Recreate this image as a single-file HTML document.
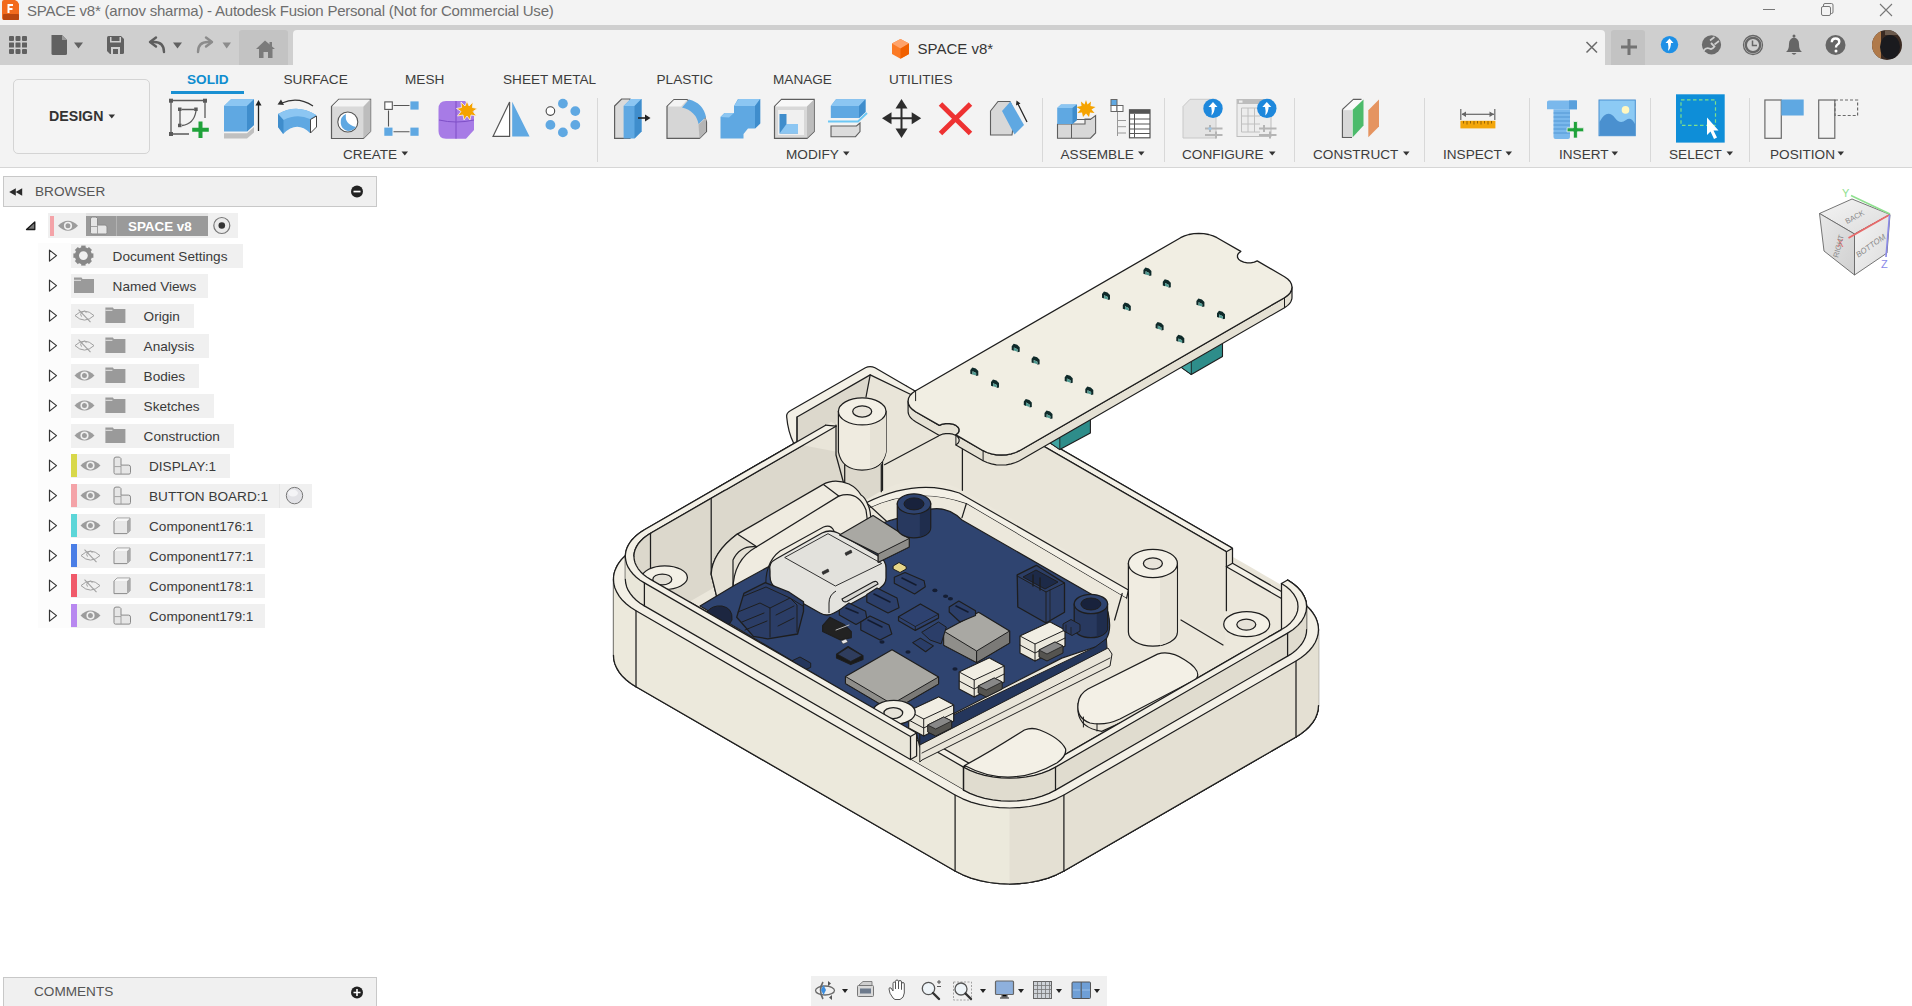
<!DOCTYPE html>
<html><head><meta charset="utf-8">
<style>
*{box-sizing:border-box;margin:0;padding:0}
html,body{width:1912px;height:1006px;overflow:hidden;background:#fff;font-family:"Liberation Sans",sans-serif;position:relative}
.a{position:absolute}
.t{position:absolute;white-space:nowrap;line-height:1}
#title{left:0;top:0;width:1912px;height:25px;background:#f3f3f3}
#tabbar{left:0;top:25px;width:1912px;height:40px;background:#cfcfcf}
#toolbar{left:0;top:65px;width:1912px;height:103px;background:#f3f3f3;border-bottom:1px solid #d6d6d6}
.tab{font-size:13.6px;color:#3c3c3c;top:72.6px}
.grp{font-size:13.6px;color:#3c3c3c;top:148px}
.sep{position:absolute;top:98px;width:1px;height:64px;background:#d8d8d8}
.row{position:absolute;height:25px;background:#f0f0f0}
.rt{position:absolute;font-size:13.6px;color:#3a3a3a;white-space:nowrap;line-height:1}
</style></head><body>
<!-- title bar -->
<div id="title" class="a"></div>
<div class="t" style="left:27px;top:3px;font-size:15px;color:#6e6e6e;letter-spacing:-0.22px">SPACE v8* (arnov sharma) - Autodesk Fusion Personal (Not for Commercial Use)</div>
<!-- tab bar -->
<div id="tabbar" class="a"></div>
<svg class="a" style="left:0;top:0" width="1912" height="65" viewBox="0 0 1912 65">
 <!-- window controls -->
 <line x1="1763" y1="9.5" x2="1775" y2="9.5" stroke="#777" stroke-width="1"/>
 <rect x="1821.5" y="6.5" width="9" height="9" rx="1.5" fill="none" stroke="#777" stroke-width="1"/>
 <path d="M1823.5 6.5 V5 a1.5 1.5 0 0 1 1.5 -1.5 H1831.5 a1.5 1.5 0 0 1 1.5 1.5 V12 a1.5 1.5 0 0 1 -1.5 1.5 H1830.5" fill="none" stroke="#777" stroke-width="1"/>
 <path d="M1880 4 L1892 16 M1892 4 L1880 16" stroke="#777" stroke-width="1.1"/>
 <!-- app logo -->
 <path d="M2 2 Q2 0 4 0 L15 0 Q18 1 19 4 L19 19 Q19 20 18 20 L4 20 Q2 20 2 18 Z" fill="#f26b1d"/>
 <rect x="3" y="14" width="16" height="6" rx="1" fill="#b9470f"/>
 <path d="M7.5 4 H13 V6 H9.5 V8 H12.5 V10 H9.5 V13 H7.5 Z" fill="#fff"/>
 <!-- grid icon -->
 <g fill="#616161">
  <rect x="9" y="36" width="5" height="5" rx="1"/><rect x="15.5" y="36" width="5" height="5" rx="1"/><rect x="22" y="36" width="5" height="5" rx="1"/>
  <rect x="9" y="42.5" width="5" height="5" rx="0.5"/><rect x="15.5" y="42.5" width="5" height="5" rx="0.5"/><rect x="22" y="42.5" width="5" height="5" rx="0.5"/>
  <rect x="9" y="49" width="5" height="5" rx="1"/><rect x="15.5" y="49" width="5" height="5" rx="1"/><rect x="22" y="49" width="5" height="5" rx="1"/>
 </g>
 <!-- file -->
 <path d="M51.5 35 H62 L67 40 V53.5 Q67 55 65.5 55 H53 Q51.5 55 51.5 53.5 Z" fill="#616161"/>
 <path d="M62 35 V40 H67" fill="#9a9a9a"/>
 <path d="M74 42.5 H83 L78.5 48.5 Z" fill="#616161"/>
 <!-- save -->
 <path d="M107 37.5 Q107 36 108.5 36 H121 L124 39 V52.5 Q124 54 122.5 54 H110 L107 51 Z" fill="#616161"/>
 <rect x="110" y="37" width="11" height="5.5" fill="#cfcfcf"/>
 <rect x="111.5" y="37" width="8" height="4" fill="#616161"/>
 <path d="M111 54 V47 H120 V54 H118 V49 H113 V54 Z" fill="#cfcfcf"/>
 <!-- undo -->
 <path d="M164 52 Q164 42 154 42 H152" fill="none" stroke="#5e5e5e" stroke-width="2.4" stroke-linecap="round"/>
 <path d="M156 37.5 L150 42 L156 46.5" fill="none" stroke="#5e5e5e" stroke-width="2.4" stroke-linecap="round" stroke-linejoin="round"/>
 <path d="M173 42.5 H182 L177.5 48.5 Z" fill="#616161"/>
 <!-- redo -->
 <path d="M198 52 Q198 42 208 42 H210" fill="none" stroke="#8c8c8c" stroke-width="2.4" stroke-linecap="round"/>
 <path d="M206 37.5 L212 42 L206 46.5" fill="none" stroke="#8c8c8c" stroke-width="2.4" stroke-linecap="round" stroke-linejoin="round"/>
 <path d="M222.5 42.5 H231 L226.7 48.5 Z" fill="#8c8c8c"/>
 <!-- home tab -->
 <path d="M239 65 V33 Q239 30 242 30 H285 Q288 30 288 33 V65 Z" fill="#c3c3c3"/>
 <path d="M265 40.5 L275 49 H272.5 V58 H268 V52 H263.5 V58 H259 V49 H256 Z" fill="#7b7b7b"/>
 <rect x="269.5" y="42" width="2.5" height="5" fill="#7b7b7b"/>
 <!-- doc tab -->
 <path d="M293 65 V34 Q293 30 297 30 H1601 Q1605 30 1605 34 V65 Z" fill="#f3f3f3"/>
 <!-- orange cube -->
 <path d="M900.5 39 L909 43.5 V54 L900.5 58.7 L892 54 V43.5 Z" fill="#fb7a25"/>
 <path d="M900.5 39 L909 43.5 L900.5 48.5 L892 43.5 Z" fill="#ffa36a"/>
 <path d="M900.5 48.5 L909 43.5 V54 L900.5 58.7 Z" fill="#f06000"/>
 <path d="M1586.5 42 L1597 52.5 M1597 42 L1586.5 52.5" stroke="#6a6a6a" stroke-width="1.5"/>
 <!-- plus tab -->
 <path d="M1611 65 V33 Q1611 30 1614 30 H1642 Q1645 30 1645 33 V65 Z" fill="#c3c3c3"/>
 <path d="M1621 47 H1637 M1629 39 V55" stroke="#737373" stroke-width="3"/>
 <!-- blue upload -->
 <circle cx="1669.5" cy="44.6" r="8.7" fill="#1e90e6"/>
 <path d="M1669.5 38.5 L1673.5 43 H1671 Q1671 48 1668 51 Q1669 47 1667.9 43 H1665.5 Z" fill="#fff"/>
 <!-- plug -->
 <circle cx="1711.5" cy="44.8" r="9.6" fill="#6a6a6a"/>
 <path d="M1703.5 51 Q1706 47 1709.5 48.5 Q1712 50 1714.5 46.5 L1711 43" fill="none" stroke="#cfcfcf" stroke-width="1.8"/>
 <path d="M1710 40.5 L1714.5 37 M1714.5 44.5 L1719 41" stroke="#cfcfcf" stroke-width="1.6"/>
 <path d="M1708 42 L1713 37.5 L1719.5 44 L1715 48.5 Z" fill="#cfcfcf" opacity="0"/>
 <!-- clock -->
 <circle cx="1753" cy="45" r="9.5" fill="none" stroke="#666" stroke-width="1.3"/>
 <circle cx="1753" cy="45" r="7.2" fill="none" stroke="#666" stroke-width="2.3"/>
 <path d="M1752.5 40.5 V45.5 H1757" fill="none" stroke="#666" stroke-width="1.5"/>
 <!-- bell -->
 <path d="M1786 52 Q1789 50 1789 44 Q1789 38.5 1794 37.5 Q1799 38.5 1799 44 Q1799 50 1802 52 Z" fill="#666"/>
 <circle cx="1794" cy="36" r="1.5" fill="#666"/>
 <path d="M1791.5 53 Q1794 56.5 1796.5 53 Z" fill="#666"/>
 <!-- help -->
 <circle cx="1835.5" cy="45" r="10" fill="#666"/>
 <path d="M1831.8 42.2 Q1831.8 38.5 1835.6 38.5 Q1839.3 38.5 1839.3 41.8 Q1839.3 43.8 1837.3 44.8 Q1836 45.5 1836 47.5" fill="none" stroke="#fff" stroke-width="2.4"/>
 <circle cx="1836" cy="51" r="1.5" fill="#fff"/>
 <!-- avatar -->
 <defs><clipPath id="av"><circle cx="1887" cy="45" r="15"/></clipPath></defs>
 <g clip-path="url(#av)">
  <rect x="1872" y="30" width="30" height="30" fill="#3a2a22"/>
  <rect x="1872" y="30" width="9" height="30" fill="#b07a4a"/>
  <ellipse cx="1890" cy="47" rx="10" ry="12" fill="#1a1a1e"/>
  <rect x="1885" y="30" width="12" height="5" fill="#6b5a4d"/>
 </g>
</svg>
<div class="t" style="left:917.5px;top:41px;font-size:15px;color:#353535">SPACE v8*</div>
<!-- toolbar -->
<div id="toolbar" class="a"></div>
<div class="a" style="left:12.5px;top:78.5px;width:137px;height:75px;border:1px solid #d4d4d4;border-radius:5px;background:#f4f4f4"></div>
<div class="t" style="left:49px;top:108.6px;font-size:14.2px;font-weight:700;color:#333">DESIGN</div>
<svg class="a" style="left:108px;top:114px" width="8" height="5"><path d="M0.5 0.5 H7 L3.75 4.5 Z" fill="#333"/></svg>
<div class="t tab" style="left:187px;font-weight:700;color:#0f8dcf">SOLID</div>
<div class="a" style="left:171px;top:91px;width:73px;height:3px;background:#1a90d2"></div>
<div class="t tab" style="left:283.5px">SURFACE</div>
<div class="t tab" style="left:405px">MESH</div>
<div class="t tab" style="left:503px">SHEET METAL</div>
<div class="t tab" style="left:656.5px">PLASTIC</div>
<div class="t tab" style="left:773px">MANAGE</div>
<div class="t tab" style="left:889px">UTILITIES</div>
<div class="t grp" style="left:343px">CREATE</div>
<div class="t grp" style="left:786px">MODIFY</div>
<div class="t grp" style="left:1060.5px">ASSEMBLE</div>
<div class="t grp" style="left:1182px">CONFIGURE</div>
<div class="t grp" style="left:1313px">CONSTRUCT</div>
<div class="t grp" style="left:1443px">INSPECT</div>
<div class="t grp" style="left:1559px">INSERT</div>
<div class="t grp" style="left:1669px">SELECT</div>
<div class="t grp" style="left:1770px">POSITION</div>
<div class="sep" style="left:597px"></div>
<div class="sep" style="left:1042px"></div>
<div class="sep" style="left:1164px"></div>
<div class="sep" style="left:1294px"></div>
<div class="sep" style="left:1424px"></div>
<div class="sep" style="left:1529px"></div>
<div class="sep" style="left:1650px"></div>
<div class="sep" style="left:1749px"></div>
<svg class="a" style="left:0;top:0" width="1912" height="170" viewBox="0 0 1912 170">
 <g fill="#333">
  <path d="M401.5 151.5 H408 L404.75 155.5 Z"/>
  <path d="M843 151.5 H849.5 L846.25 155.5 Z"/>
  <path d="M1138 151.5 H1144.5 L1141.25 155.5 Z"/>
  <path d="M1269 151.5 H1275.5 L1272.25 155.5 Z"/>
  <path d="M1403 151.5 H1409.5 L1406.25 155.5 Z"/>
  <path d="M1505.5 151.5 H1512 L1508.75 155.5 Z"/>
  <path d="M1611.5 151.5 H1618 L1614.75 155.5 Z"/>
  <path d="M1726.5 151.5 H1733 L1729.75 155.5 Z"/>
  <path d="M1837.5 151.5 H1844 L1840.75 155.5 Z"/>
 </g>
 <!-- sketch -->
 <g stroke="#5a5a5a" stroke-width="1.3" fill="none">
  <path d="M171 102 V133 M173 100.5 H203 M205 102 V118 M173 134 H189"/>
  <path d="M180 111 V124 M181.5 109.5 H194.5 M182 125.5 Q194 124 196 111"/>
 </g>
 <g fill="#5a5a5a">
  <rect x="169" y="98.7" width="4" height="4"/><rect x="203" y="98.7" width="4" height="4"/><rect x="169" y="132" width="4" height="4"/>
  <rect x="178" y="107.5" width="3.5" height="3.5"/><rect x="194.2" y="107.5" width="3.5" height="3.5"/><rect x="178" y="123.7" width="3.5" height="3.5"/>
 </g>
 <path d="M198.5 121.5 h4 v6.3 h6.3 v4 h-6.3 v6.3 h-4 v-6.3 h-6.3 v-4 h6.3 z" fill="#1fa23a"/>
 <!-- extrude -->
 <path d="M224 133.3 H247 L254 127 V132.5 L247 138.4 H224 Z" fill="#c0c0c0"/>
 <path d="M224 106 L231 99.2 H254 V125 L247 131.5 H224 Z" fill="#5fa8e2"/>
 <path d="M224 106 L231 99.2 H254 L247 106 Z" fill="#8cc6f2"/>
 <path d="M247 106 L254 99.2 V125 L247 131.5 Z" fill="#3f8dcc"/>
 <path d="M258.5 131 V103" stroke="#222" stroke-width="1.3"/>
 <path d="M255.5 105.5 L258.5 100 L261.5 105.5 Z" fill="#222"/>
 <!-- revolve -->
 <path d="M278 114 Q297 103 316 115 V125 L310 133 Q297 120 283 134 L278 127 Z" fill="#5fa8e2"/>
 <path d="M278 114 Q297 103 316 115 L310 119 Q297 113 283.5 120 Z" fill="#8cc6f2"/>
 <path d="M278 114 L283.5 120 V134 L278 127 Z" fill="#3f8dcc"/>
 <path d="M310.5 119.5 L316.5 116 V127 L310.5 133 Z" fill="#fff" stroke="#444" stroke-width="1"/>
 <path d="M313 106 Q298 96 282 103" fill="none" stroke="#333" stroke-width="1.2"/>
 <path d="M281 99.5 L277.5 104.5 L284 105 Z" fill="#333"/>
 <!-- hole -->
 <path d="M331.5 106.5 L338.7 99.3 H370.6 V131.3 L363.4 138.5 H331.5 Z" fill="#d9d9d9" stroke="#5e5e5e" stroke-width="1.2"/>
 <path d="M363.4 106.5 L370.6 99.3 V131.3 L363.4 138.5 Z" fill="#bdbdbd"/>
 <path d="M332 106.5 L339 99.5 H370 L363.4 106.5 Z" fill="#f4f4f4"/>
 <circle cx="347.8" cy="122" r="10" fill="#fff" stroke="#555" stroke-width="1.1"/>
 <path d="M346 114 Q344 124 356 127 Q353 131 347.8 131 A9 9 0 0 1 346 114 Z" fill="#5fa8e2"/>
 <!-- rect pattern -->
 <rect x="384.8" y="101.9" width="7.5" height="7.5" fill="#fff" stroke="#555" stroke-width="1.1"/>
 <g fill="#5fa8e2"><rect x="410.4" y="101.4" width="8.2" height="8.2"/><rect x="384.3" y="127.6" width="8.2" height="8.2"/><rect x="410.4" y="127.6" width="8.2" height="8.2"/></g>
 <path d="M393.5 105.5 H409.5 M388.5 110.5 V126.5 M393.5 131.7 H409.5" stroke="#555" stroke-width="1.1"/>
 <!-- form -->
 <path d="M446 101 H465 L474 110 V130 L466 138.7 H446 Q438.5 138.7 438.5 131 V109 Q438.5 101 446 101 Z" fill="#a77be6"/>
 <path d="M439 120 Q456 124 474 120 M456 101 V138.7" stroke="#7e4fc7" stroke-width="1" fill="none"/>
 <path d="M467 101 L469 106 L473 102 L472.5 107.5 L477.5 108.5 L473 111.5 L476.5 116 L471 115 L470 120 L467 116 L464 120 L463 115 L457.5 116 L461 111.5 L456.5 108.5 L461.5 107.5 L461 102 L465 106 Z" fill="#f5a300" stroke="#f4f4f4" stroke-width="0.8"/>
 <!-- mirror -->
 <path d="M493 136.4 L509.6 102 V136.4 Z" fill="#fff" stroke="#555" stroke-width="1.2"/>
 <path d="M512.2 101.8 L529.6 136.4 H512.2 Z" fill="#5fa8e2"/>
 <!-- circ pattern -->
 <circle cx="550.4" cy="111.1" r="4.3" fill="#fff" stroke="#444" stroke-width="1.1"/>
 <g fill="#5fa8e2"><circle cx="562.9" cy="103.6" r="4.9"/><circle cx="575.3" cy="111.1" r="4.9"/><circle cx="550.4" cy="124.9" r="4.9"/><circle cx="575.3" cy="124.9" r="4.9"/><circle cx="562.9" cy="132.4" r="4.9"/></g>
 <!-- press pull -->
 <path d="M614.6 106 L621.6 99 H630 V138.4 H614.6 Z" fill="#dadada" stroke="#5e5e5e" stroke-width="1.2"/>
 <path d="M623.6 106 L630.6 99 H641.5 V131.5 L634.5 138.4 H623.6 Z" fill="#5fa8e2"/>
 <path d="M623.6 106 L630.6 99 H641.5 L634.5 106 Z" fill="#8cc6f2"/>
 <path d="M634.5 106 L641.5 99 V131.5 L634.5 138.4 Z" fill="#3f8dcc"/>
 <path d="M638 118 H647" stroke="#222" stroke-width="1.6"/><path d="M645 114.5 L650.5 118 L645 121.5 Z" fill="#222"/>
 <!-- fillet -->
 <path d="M667 106.5 L674 99.5 H687 L694 104 Q704 112 706.5 122 V131.5 L699.5 138.4 H667 Z" fill="#d6d6d6" stroke="#5e5e5e" stroke-width="1.2"/>
 <path d="M667.5 106.5 L674 100 H687 L681 106.5 Z" fill="#f4f4f4"/>
 <path d="M682 107.5 L689 99.5 Q703 103 706 117 L698.5 124 Q696 111 682 107.5 Z" fill="#5fa8e2"/>
 <path d="M698.5 124.5 L706 118 V131.5 L699.5 138.4 Z" fill="#b5b5b5"/>
 <!-- combine -->
 <path d="M720.5 117 L724.5 113 H734 V106 L738 99 H760.2 V123.5 L755 128.5 H748 L743.5 134 V138.4 H720.5 Z" fill="#5fa8e2"/>
 <path d="M734 106 L738.5 99 H760.2 L755 106 Z M720.5 117 L724.5 113 H734 L729 117.5 Z" fill="#8cc6f2"/>
 <path d="M755 106 L760.2 99 V123.5 L755 128.5 Z" fill="#3f8dcc"/>
 <!-- shell -->
 <path d="M774.5 106.5 L781.5 99.3 H814.2 V131.5 L807 138.4 H774.5 Z" fill="#d8d8d8" stroke="#5e5e5e" stroke-width="1.2"/>
 <path d="M775 106.5 L781.5 100 H813.5 L807 106.5 Z" fill="#f8f8f8"/>
 <path d="M807 106.5 L813.8 100 V131.5 L807 138 Z" fill="#bdbdbd"/>
 <rect x="778" y="110" width="26" height="25" fill="#f0f0f0"/>
 <path d="M779.5 114 H786.5 V124 H798 V133.5 H779.5 Z" fill="#3f8dcc"/>
 <path d="M779.5 133.5 L786.5 124 H798 V133.5 Z" fill="#8cc6f2"/>
 <!-- split -->
 <path d="M831 136.7 V126 H856.5 L860 123 V131.5 L855.5 136.7 Z" fill="#dcdcdc" stroke="#5e5e5e" stroke-width="1.1"/>
 <path d="M830.8 106 L836 99.2 H865.5 V112 L859 118 H830.8 Z" fill="#5fa8e2"/>
 <path d="M830.8 106 L836 99.2 H865.5 L859 106 Z" fill="#8cc6f2"/>
 <path d="M859 106 L865.5 99.2 V112 L859 118 Z" fill="#3f8dcc"/>
 <path d="M828 121.5 H858 L867 113" stroke="#6cc8f5" stroke-width="2" fill="none"/>
 <!-- move -->
 <g fill="#2d2d2d">
  <path d="M901.5 99 L907.5 108.5 H895.5 Z"/><path d="M901.5 138 L907.5 128.5 H895.5 Z"/>
  <path d="M882 118.2 L891.5 112.2 V124.2 Z"/><path d="M921.2 118.2 L911.7 112.2 V124.2 Z"/>
 </g>
 <path d="M901.5 107 V129 M890 118.2 H913" stroke="#2d2d2d" stroke-width="2"/>
 <!-- delete -->
 <path d="M940.5 104 L970.5 133.5 M970.5 104 L940.5 133.5" stroke="#ee3232" stroke-width="5"/>
 <!-- scale/change -->
 <path d="M990.5 111 L998 101.5 H1010 L1015 113 L1012 135 H990.5 Z" fill="#d8d8d8" stroke="#5e5e5e" stroke-width="1.1"/>
 <path d="M1002 111 L1010.5 101.5 L1024 125 L1014.5 134.5 Z" fill="#5fa8e2"/>
 <path d="M1027 122 L1018 104" stroke="#222" stroke-width="1.2"/><path d="M1016 105.5 L1016.5 100.5 L1020.5 103.5 Z" fill="#222"/>
 <!-- new component -->
 <path d="M1057.5 124 H1085 V119 H1091 L1095.6 115.5 V133 L1090.5 138.2 H1057.5 Z" fill="#d8d8d8" stroke="#5e5e5e" stroke-width="1.1"/>
 <path d="M1071.5 124 V138 M1071.5 124.5 L1076 119.5 H1091" stroke="#5e5e5e" stroke-width="1" fill="none"/>
 <path d="M1057.2 108 L1061 104.5 H1077 V120 L1072.5 124 H1057.2 Z" fill="#5fa8e2"/>
 <path d="M1057.2 108 L1061 104.5 H1077 L1072.5 108 Z" fill="#8cc6f2"/>
 <path d="M1072.5 108 L1077 104.5 V120 L1072.5 124 Z" fill="#3f8dcc"/>
 <path d="M1086 100 L1087.5 104.5 L1091 101.5 L1090.5 106 L1095.5 107 L1091.5 109.5 L1094.5 113 L1090 112.5 L1089 117 L1086 113.5 L1083 117 L1082 112.5 L1077.5 113 L1080.5 109.5 L1076.5 107 L1081.5 106 L1081 101.5 L1084.5 104.5 Z" fill="#f5a300"/>
 <!-- joint table -->
 <rect x="1111" y="99.5" width="6" height="6" fill="#5fa8e2" stroke="#666" stroke-width="1"/>
 <rect x="1111" y="105.5" width="6" height="6" fill="#fff" stroke="#666" stroke-width="1"/>
 <rect x="1117" y="105.5" width="6" height="6" fill="#fff" stroke="#666" stroke-width="1"/>
 <path d="M1117.5 112 V136 M1117.5 120.5 H1126 M1117.5 126.7 H1126 M1117.5 133 H1126" stroke="#999" stroke-width="1"/>
 <rect x="1129.5" y="109.8" width="20.5" height="28" fill="#fff" stroke="#555" stroke-width="1.2"/>
 <rect x="1129.5" y="109.8" width="20.5" height="4" fill="#555"/>
 <path d="M1134.5 114 V137.5 M1130 119 H1150 M1130 124 H1150 M1130 129 H1150 M1130 133.5 H1150" stroke="#555" stroke-width="1"/>
 <!-- configure 1 -->
 <path d="M1183 106.5 L1190 99.3 H1216 V138 H1183 Z" fill="#e4e4e4" stroke="#c8c8c8" stroke-width="1"/>
 <path d="M1205 128.5 H1222.5 M1205 135 H1222.5" stroke="#b5b5b5" stroke-width="2"/>
 <path d="M1210 125 V132 M1216 131.5 V138.5" stroke="#b5b5b5" stroke-width="2"/>
 <rect x="1208.5" y="127.5" width="3" height="2.2" fill="#9cc8ec"/>
 <circle cx="1213" cy="108.4" r="9.7" fill="#1e88dc"/>
 <path d="M1213 102 L1217.5 107 H1214.8 Q1214.8 112 1211.5 115.5 Q1212.3 110.5 1211.2 107 H1208.5 Z" fill="#fff"/>
 <!-- configure 2 -->
 <rect x="1237" y="99.5" width="34" height="37" fill="#ededed" stroke="#bdbdbd" stroke-width="1"/>
 <rect x="1237" y="99.5" width="34" height="4.5" fill="#bdbdbd"/>
 <rect x="1239" y="100.5" width="3.5" height="2.2" fill="#eee"/>
 <path d="M1241.5 108 V132 M1248 108 V132 M1254.5 108 V132 M1241.5 108 H1260 M1241.5 116 H1260 M1241.5 124 H1260 M1241.5 132 H1260" stroke="#c0c0c0" stroke-width="1" fill="none"/>
 <path d="M1259 128.5 H1276.5 M1259 135 H1276.5" stroke="#b5b5b5" stroke-width="2"/>
 <path d="M1264 125 V132 M1270 131.5 V138.5" stroke="#b5b5b5" stroke-width="2"/>
 <circle cx="1266.8" cy="108.4" r="9.7" fill="#1e88dc"/>
 <path d="M1266.8 102 L1271.3 107 H1268.6 Q1268.6 112 1265.3 115.5 Q1266.1 110.5 1265 107 H1262.3 Z" fill="#fff"/>
 <!-- construct -->
 <path d="M1342.5 109.5 L1353.5 99.3 H1361.5 M1342.5 109.5 V137.3 H1352" stroke="#5e5e5e" stroke-width="1.3" fill="none"/>
 <rect x="1343.2" y="110.2" width="8.8" height="26.5" fill="#d8d8d8"/>
 <path d="M1343.2 109.8 L1353.5 100 H1362.5 L1352.5 109.8 Z" fill="#fafafa"/>
 <path d="M1352.7 109.8 L1363.5 99.6 V125.5 L1352.7 137.3 Z" fill="#4cbb6b"/>
 <path d="M1368.3 110.3 L1379 99.6 V126.5 L1368.3 137.3 Z" fill="#e59460"/>
 <!-- inspect -->
 <path d="M1460.8 109 V120 M1494.8 109 V120" stroke="#666" stroke-width="1.2"/>
 <path d="M1462 114.3 H1494" stroke="#666" stroke-width="1.2"/>
 <path d="M1461.5 114.3 L1466 111.5 V117 Z M1494 114.3 L1489.5 111.5 V117 Z" fill="#666"/>
 <rect x="1460.4" y="120.8" width="35" height="7.6" fill="#f3a60a"/>
 <path d="M1463.5 121 V123.5 M1467 121 V124.5 M1470.5 121 V123.5 M1474 121 V124.5 M1477.5 121 V123.5 M1481 121 V124.5 M1484.5 121 V123.5 M1488 121 V124.5 M1491.5 121 V123.5" stroke="#8a5a00" stroke-width="0.9"/>
 <!-- insert bolt -->
 <path d="M1547 102 Q1547 100.4 1549 100.4 H1575 Q1577 100.4 1577 102 V109.3 H1547 Z" fill="#7ab8ec"/>
 <rect x="1569" y="100.4" width="8" height="8.9" fill="#5aa0dc"/>
 <path d="M1553.5 109.3 H1570 V137 Q1570 139 1568 139 H1555.5 Q1553.5 139 1553.5 137 Z" fill="#7ab8ec"/>
 <path d="M1553.5 113 H1570 M1553.5 117 H1570 M1553.5 121 H1570 M1553.5 125 H1570 M1553.5 129 H1570 M1553.5 133 H1570" stroke="#4a90cf" stroke-width="0.8"/>
 <path d="M1573.4 121.5 h4 v6.3 h6.3 v4 h-6.3 v6.3 h-4 v-6.3 h-6.3 v-4 h6.3 z" fill="#1fa23a" stroke="#f3f3f3" stroke-width="0.8"/>
 <!-- insert image -->
 <rect x="1599" y="100" width="36.3" height="35.7" fill="#8ccaf4" stroke="#4a90cf" stroke-width="1"/>
 <path d="M1599.5 122 Q1607 108 1615 118 Q1620 125 1626 120 Q1631 116 1635 124 V135.5 H1599.5 Z" fill="#4a90cf"/>
 <circle cx="1625.5" cy="109.9" r="3.8" fill="#fff7c0"/>
 <!-- select -->
 <rect x="1676" y="94.3" width="48.7" height="48.3" fill="#0e8ed8"/>
 <rect x="1681" y="99.8" width="34.5" height="25.5" fill="none" stroke="#7ee08a" stroke-width="1.2" stroke-dasharray="3.5 2.5"/>
 <path d="M1707 117.5 V135 L1710.5 131.5 L1714 139 L1717 137.5 L1713.5 130.5 H1718.5 Z" fill="#fff"/>
 <!-- position -->
 <rect x="1764.9" y="100" width="16.4" height="38.3" fill="none" stroke="#6a6a6a" stroke-width="1.2"/>
 <rect x="1781.3" y="99.5" width="22.4" height="16" fill="#5fa8e2"/>
 <rect x="1818.7" y="100" width="16.1" height="38.3" fill="none" stroke="#6a6a6a" stroke-width="1.2"/>
 <rect x="1835" y="100" width="22.6" height="15.5" fill="none" stroke="#6a6a6a" stroke-width="1.2" stroke-dasharray="3 2"/>
</svg>

<!-- MODEL START -->
<svg class="a" style="left:0;top:0" width="1912" height="1006" viewBox="0 0 1912 1006">
<path d="M613.5 579.4 L613.6 576.5 L614.1 573.5 L615.0 570.7 L616.1 567.9 L617.5 565.1 L619.3 562.4 L621.4 559.7 L623.8 557.1 L626.4 554.7 L629.4 552.3 L632.5 550.1 L636.0 548.0 L868.1 413.9 L871.8 412.0 L875.6 410.1 L879.7 408.4 L884.0 406.9 L888.5 405.5 L893.0 404.3 L897.7 403.3 L902.6 402.5 L907.5 401.8 L912.4 401.3 L917.4 401.0 L922.5 400.9 L927.5 401.0 L932.5 401.3 L937.5 401.8 L942.4 402.5 L947.2 403.3 L951.9 404.3 L956.5 405.5 L960.9 406.9 L965.2 408.4 L969.3 410.1 L973.2 412.0 L976.9 413.9 L1296.0 598.2 L1299.4 600.3 L1302.6 602.6 L1305.5 604.9 L1308.2 607.4 L1310.6 610.0 L1312.7 612.6 L1314.4 615.3 L1315.9 618.1 L1317.0 620.9 L1317.8 623.8 L1318.3 626.7 L1318.5 629.6 L1318.5 705.6 L1318.3 708.5 L1317.8 711.4 L1317.0 714.3 L1315.9 717.1 L1314.4 719.9 L1312.7 722.6 L1310.6 725.2 L1308.2 727.8 L1305.5 730.3 L1302.6 732.6 L1299.4 734.9 L1296.0 737.0 L1063.9 871.0 L1060.2 873.0 L1056.3 874.8 L1052.2 876.5 L1048.0 878.1 L1043.5 879.4 L1038.9 880.6 L1034.2 881.6 L1029.4 882.5 L1024.5 883.1 L1019.5 883.6 L1014.5 883.9 L1009.5 884.0 L1004.5 883.9 L999.5 883.6 L994.5 883.1 L989.6 882.5 L984.8 881.6 L980.1 880.6 L975.5 879.4 L971.0 878.1 L966.8 876.5 L962.7 874.8 L958.8 873.0 L955.1 871.0 L636.0 686.8 L632.5 684.6 L629.4 682.4 L626.4 680.0 L623.8 677.5 L621.4 675.0 L619.3 672.3 L617.5 669.6 L616.1 666.8 L615.0 664.0 L614.1 661.1 L613.6 658.2 L613.5 655.4 Z" fill="#ece9dc" stroke="#1e1e1e" stroke-width="1.25" stroke-linejoin="round" stroke-linecap="round"/>
<path d="M1009.5 884.0 L1019.5 883.6 L1029.4 882.5 L1038.9 880.6 L1048.0 878.1 L1056.3 874.8 L1063.9 871.0 L1296.0 737.0 L1302.6 732.6 L1308.2 727.8 L1312.6 722.6 L1315.9 717.1 L1317.8 711.4 L1318.5 705.6 L1318.5 629.6 L1317.8 635.4 L1315.9 641.1 L1312.6 646.6 L1308.2 651.8 L1302.6 656.6 L1296.0 661.0 L1063.9 795.0 L1056.3 798.8 L1048.0 802.1 L1038.9 804.6 L1029.4 806.5 L1019.5 807.6 L1009.5 808.0 Z" fill="#e4e0d3" stroke="none"/>
<path d="M1009.5 884.0 L1019.5 883.6 L1029.4 882.5 L1038.9 880.6 L1048.0 878.1 L1056.3 874.8 L1063.9 871.0 L1296.0 737.0 L1302.6 732.6 L1308.2 727.8 L1312.6 722.6 L1315.9 717.1 L1317.8 711.4 L1318.5 705.6" fill="none" stroke="#1e1e1e" stroke-width="1.25" stroke-linejoin="round" stroke-linecap="round"/>
<path d="M955.1 795.0 L958.8 797.0 L962.7 798.8 L966.8 800.5 L971.0 802.1 L975.5 803.4 L980.1 804.6 L984.8 805.6 L989.6 806.5 L994.5 807.2 L999.5 807.6 L1004.5 807.9 L1009.5 808.0 L1014.5 807.9 L1019.5 807.6 L1024.5 807.2 L1029.4 806.5 L1034.2 805.6 L1038.9 804.6 L1043.5 803.4 L1048.0 802.1 L1052.2 800.5 L1056.3 798.8 L1060.2 797.0 L1063.9 795.0 L1296.0 661.0 L1299.4 658.9 L1302.6 656.6 L1305.5 654.3 L1308.2 651.8 L1310.6 649.2 L1312.6 646.6 L1314.4 643.9 L1315.9 641.1 L1317.0 638.3 L1317.8 635.4 L1318.3 632.5 L1318.5 629.6 L1318.3 626.7 L1317.8 623.8 L1317.0 620.9 L1315.9 618.1 L1314.4 615.3 L1312.6 612.6 L1310.6 610.0 L1308.2 607.4 L1305.5 604.9 L1302.6 602.6 L1299.4 600.3 L1296.0 598.2 L976.9 413.9 L973.2 412.0 L969.3 410.1 L965.2 408.4 L960.9 406.9 L956.5 405.5 L951.9 404.3 L947.2 403.3 L942.4 402.5 L937.5 401.8 L932.5 401.3 L927.5 401.0 L922.5 400.9 L917.4 401.0 L912.4 401.3 L907.5 401.8 L902.6 402.5 L897.7 403.3 L893.0 404.3 L888.4 405.5 L884.0 406.9 L879.7 408.4 L875.6 410.1 L871.8 412.0 L868.1 413.9 L636.0 547.9 L632.6 550.1 L629.4 552.3 L626.4 554.7 L623.8 557.1 L621.4 559.7 L619.3 562.4 L617.5 565.1 L616.1 567.9 L614.9 570.7 L614.1 573.6 L613.6 576.4 L613.5 579.4 L613.6 582.3 L614.1 585.1 L614.9 588.0 L616.1 590.8 L617.5 593.6 L619.3 596.3 L621.4 599.0 L623.8 601.6 L626.4 604.0 L629.4 606.4 L632.6 608.6 L636.0 610.8 Z" fill="#f3f0e6" stroke="#1e1e1e" stroke-width="1.25" stroke-linejoin="round" stroke-linecap="round"/>
<path d="M955.1 871.0 L955.1 795.0" stroke="#1e1e1e" stroke-width="1.25" stroke-linejoin="round" stroke-linecap="round"/>
<path d="M1063.9 871.0 L1063.9 795.0" stroke="#1e1e1e" stroke-width="1.25" stroke-linejoin="round" stroke-linecap="round"/>
<path d="M1296.0 737.0 L1296.0 661.0" stroke="#1e1e1e" stroke-width="1.25" stroke-linejoin="round" stroke-linecap="round"/>
<path d="M636.0 686.8 L636.0 610.8" stroke="#1e1e1e" stroke-width="1.25" stroke-linejoin="round" stroke-linecap="round"/>
<path d="M625.4 556.4 L625.5 553.9 L625.9 551.5 L626.6 549.0 L627.6 546.6 L628.8 544.3 L630.3 542.0 L632.0 539.7 L634.1 537.6 L636.3 535.5 L638.8 533.5 L641.5 531.6 L644.4 529.8 L876.5 395.8 L879.6 394.1 L882.9 392.6 L886.3 391.1 L890.0 389.8 L893.7 388.7 L897.6 387.7 L901.6 386.8 L905.6 386.1 L909.8 385.5 L914.0 385.1 L918.2 384.9 L922.5 384.8 L926.7 384.9 L931.0 385.1 L935.1 385.5 L939.3 386.1 L943.4 386.8 L947.4 387.7 L951.2 388.7 L955.0 389.8 L958.6 391.1 L962.1 392.6 L965.4 394.1 L968.5 395.8 L1287.6 580.0 L1290.5 581.8 L1293.2 583.7 L1295.7 585.7 L1297.9 587.8 L1299.9 590.0 L1301.7 592.2 L1303.2 594.5 L1304.4 596.9 L1305.4 599.3 L1306.1 601.7 L1306.5 604.1 L1306.6 606.6 L1306.6 629.6 L1306.5 632.1 L1306.1 634.5 L1305.4 636.9 L1304.4 639.3 L1303.2 641.7 L1301.7 644.0 L1299.9 646.2 L1297.9 648.4 L1295.7 650.5 L1293.2 652.5 L1290.5 654.4 L1287.6 656.1 L1055.5 790.1 L1052.4 791.8 L1049.1 793.4 L1045.6 794.8 L1042.0 796.1 L1038.3 797.3 L1034.4 798.3 L1030.4 799.1 L1026.3 799.9 L1022.2 800.4 L1018.0 800.8 L1013.8 801.1 L1009.5 801.1 L1005.2 801.1 L1001.0 800.8 L996.8 800.4 L992.7 799.9 L988.6 799.1 L984.6 798.3 L980.7 797.3 L977.0 796.1 L973.4 794.8 L969.9 793.4 L966.6 791.8 L963.5 790.1 L644.4 605.9 L641.5 604.1 L638.8 602.2 L636.3 600.2 L634.1 598.1 L632.0 596.0 L630.3 593.7 L628.8 591.4 L627.6 589.1 L626.6 586.7 L625.9 584.2 L625.5 581.8 L625.4 579.4 Z" fill="#e9e6d9" stroke="#1e1e1e" stroke-width="1.25" stroke-linejoin="round" stroke-linecap="round"/>
<path d="M963.5 767.1 L966.6 768.8 L969.9 770.4 L973.4 771.8 L977.0 773.1 L980.7 774.3 L984.6 775.3 L988.6 776.2 L992.7 776.9 L996.8 777.4 L1001.0 777.8 L1005.2 778.1 L1009.5 778.1 L1013.8 778.1 L1018.0 777.8 L1022.2 777.4 L1026.3 776.9 L1030.4 776.2 L1034.4 775.3 L1038.3 774.3 L1042.0 773.1 L1045.6 771.8 L1049.1 770.4 L1052.4 768.8 L1055.5 767.1 L1287.6 633.1 L1290.5 631.4 L1293.2 629.5 L1295.7 627.5 L1297.9 625.4 L1299.9 623.2 L1301.7 621.0 L1303.2 618.7 L1304.4 616.3 L1305.4 613.9 L1306.1 611.5 L1306.5 609.1 L1306.6 606.6 L1306.5 604.1 L1306.1 601.7 L1305.4 599.3 L1304.4 596.9 L1303.2 594.5 L1301.7 592.2 L1299.9 590.0 L1297.9 587.8 L1295.7 585.7 L1293.2 583.7 L1290.5 581.8 L1287.6 580.0 L968.5 395.8 L965.3 394.1 L962.1 392.6 L958.6 391.1 L955.0 389.8 L951.2 388.7 L947.4 387.7 L943.4 386.8 L939.3 386.1 L935.2 385.5 L931.0 385.1 L926.7 384.9 L922.5 384.8 L918.2 384.9 L914.0 385.1 L909.8 385.5 L905.6 386.1 L901.6 386.8 L897.6 387.7 L893.7 388.7 L890.0 389.8 L886.3 391.1 L882.9 392.6 L879.6 394.1 L876.5 395.8 L644.4 529.8 L641.5 531.6 L638.8 533.5 L636.3 535.5 L634.1 537.6 L632.1 539.7 L630.3 542.0 L628.8 544.3 L627.6 546.6 L626.6 549.0 L625.9 551.4 L625.5 553.9 L625.3 556.3 L625.5 558.8 L625.9 561.3 L626.6 563.7 L627.6 566.1 L628.8 568.4 L630.3 570.7 L632.1 573.0 L634.1 575.1 L636.3 577.2 L638.8 579.2 L641.5 581.1 L644.4 582.9 Z" fill="#f3f0e6" stroke="#1e1e1e" stroke-width="1.25" stroke-linejoin="round" stroke-linecap="round"/>
<path d="M969.6 763.6 L972.3 765.1 L975.1 766.5 L978.1 767.7 L981.3 768.8 L984.5 769.8 L987.9 770.7 L991.4 771.5 L994.9 772.1 L998.5 772.6 L1002.1 772.9 L1005.8 773.1 L1009.5 773.2 L1013.2 773.1 L1016.9 772.9 L1020.5 772.6 L1024.1 772.1 L1027.6 771.5 L1031.1 770.7 L1034.5 769.8 L1037.7 768.8 L1040.9 767.7 L1043.9 766.5 L1046.7 765.1 L1049.4 763.6 L1281.5 629.6 L1284.0 628.1 L1286.4 626.4 L1288.5 624.7 L1290.5 622.9 L1292.2 621.0 L1293.7 619.1 L1295.1 617.1 L1296.1 615.0 L1297.0 613.0 L1297.6 610.9 L1297.9 608.7 L1298.0 606.6 L1297.9 604.5 L1297.6 602.3 L1297.0 600.2 L1296.1 598.2 L1295.1 596.1 L1293.7 594.1 L1292.2 592.2 L1290.5 590.3 L1288.5 588.5 L1286.4 586.8 L1284.0 585.1 L1281.5 583.5 L962.4 399.3 L959.7 397.8 L956.8 396.5 L953.8 395.2 L950.7 394.1 L947.4 393.1 L944.1 392.2 L940.6 391.5 L937.1 390.9 L933.5 390.4 L929.8 390.0 L926.2 389.8 L922.5 389.8 L918.8 389.8 L915.1 390.0 L911.5 390.4 L907.9 390.9 L904.3 391.5 L900.9 392.2 L897.5 393.1 L894.2 394.1 L891.1 395.2 L888.1 396.5 L885.2 397.8 L882.5 399.3 L650.5 533.3 L647.9 534.9 L645.6 536.5 L643.4 538.2 L641.5 540.1 L639.7 541.9 L638.2 543.9 L636.9 545.9 L635.8 547.9 L635.0 550.0 L634.4 552.1 L634.0 554.2 L633.9 556.3 L634.0 558.5 L634.4 560.6 L635.0 562.7 L635.8 564.8 L636.9 566.8 L638.2 568.8 L639.7 570.8 L641.5 572.6 L643.4 574.5 L645.6 576.2 L647.9 577.8 L650.5 579.4 Z" fill="#ebe7db" stroke="#1e1e1e" stroke-width="1.25" stroke-linejoin="round" stroke-linecap="round"/>
<path d="M633.9 556.3 L634.2 553.2 L635.0 550.0 L636.4 546.9 L638.2 543.9 L640.6 541.0 L643.4 538.2 L646.7 535.7 L650.5 533.3 L882.5 399.3 L882.5 490.3 L650.5 624.3 L646.7 626.7 L643.4 629.2 L640.6 632.0 L638.2 634.9 L636.4 637.9 L635.0 641.0 L634.2 644.2 L633.9 647.3 Z" fill="#dcd8cc" stroke="none"/>
<path d="M882.5 399.3 L889.3 396.0 L896.8 393.3 L905.0 391.3 L913.6 390.2 L922.5 389.8 L931.3 390.2 L939.9 391.3 L948.1 393.3 L955.7 396.0 L962.4 399.3 L1226.4 551.7 L1226.4 642.7 L962.4 490.3 L955.7 487.0 L948.1 484.3 L939.9 482.3 L931.3 481.2 L922.5 480.8 L913.6 481.2 L905.0 482.3 L896.8 484.3 L889.3 487.0 L882.5 490.3 Z" fill="#e9e5d9" stroke="none"/>
<path d="M633.9 556.3 L634.2 553.2 L635.0 550.0 L636.4 546.9 L638.2 543.9 L640.6 541.0 L643.4 538.2 L646.7 535.7 L650.5 533.3 L882.5 399.3 L889.3 396.0 L896.8 393.3 L905.0 391.3 L913.6 390.2 L922.5 389.8 L931.3 390.2 L939.9 391.3 L948.1 393.3 L955.7 396.0 L962.4 399.3 L1226.4 551.7" fill="none" stroke="#1e1e1e" stroke-width="1.25" stroke-linejoin="round" stroke-linecap="round"/>
<path d="M650.5 533.3 L650.5 624.3" stroke="#1e1e1e" stroke-width="1.25" stroke-linejoin="round" stroke-linecap="round"/>
<path d="M882.5 399.3 L882.5 490.3" stroke="#1e1e1e" stroke-width="1.25" stroke-linejoin="round" stroke-linecap="round"/>
<path d="M962.4 399.3 L962.4 490.3" stroke="#1e1e1e" stroke-width="1.25" stroke-linejoin="round" stroke-linecap="round"/>
<path d="M1232.5 545.2 L1241.7 550.5 L1250.9 555.8 L1260.0 561.1 L1269.2 566.4 L1278.4 571.7 L1287.6 577.0 L1287.6 595.0 L1278.4 589.7 L1269.2 584.4 L1260.0 579.1 L1250.9 573.8 L1241.7 568.5 L1232.5 563.2 Z" fill="#ffffff" stroke="none"/>
<path d="M1226.4 566.7 L1235.6 572.0 L1244.8 577.3 L1254.0 582.6 L1263.2 587.9 L1272.3 593.2 L1281.5 598.5 L1281.5 585.0 L1272.3 579.7 L1263.2 574.4 L1254.0 569.1 L1244.8 563.8 L1235.6 558.5 L1226.4 553.2 Z" fill="#e9e5d9" stroke="none"/>
<path d="M1232.5 563.2 L1241.7 568.5 L1250.9 573.8 L1260.0 579.1 L1269.2 584.4 L1278.4 589.7 L1287.6 595.0 L1281.5 598.5 L1272.3 593.2 L1263.2 587.9 L1254.0 582.6 L1244.8 577.3 L1235.6 572.0 L1226.4 566.7 Z" fill="#f3f0e6" stroke="none"/>
<path d="M1232.5 563.2 L1241.7 568.5 L1250.9 573.8 L1260.0 579.1 L1269.2 584.4 L1278.4 589.7 L1287.6 595.0" fill="none" stroke="#1e1e1e" stroke-width="1.25" stroke-linejoin="round" stroke-linecap="round"/>
<path d="M1226.4 566.7 L1235.6 572.0 L1244.8 577.3 L1254.0 582.6 L1263.2 587.9 L1272.3 593.2 L1281.5 598.5" fill="none" stroke="#1e1e1e" stroke-width="1.25" stroke-linejoin="round" stroke-linecap="round"/>
<path d="M1226.4 551.7 L1232.5 548.2 L1232.5 563.2 L1226.4 566.7 Z" fill="#e6e2d6" stroke="#1e1e1e" stroke-width="1.25" stroke-linejoin="round"/>
<path d="M1226.4 566.7 L1226.4 610.7" fill="none" stroke="#1e1e1e" stroke-width="1.25" stroke-linejoin="round" stroke-linecap="round"/>
<path d="M1281.5 583.5 L1285.6 586.2 L1289.2 589.1 L1292.2 592.2 L1294.6 595.5 L1296.4 598.9 L1297.6 602.3 L1298.0 605.9 L1297.8 609.4 L1297.8 663.4 L1298.0 659.9 L1297.6 656.3 L1296.4 652.9 L1294.6 649.5 L1292.2 646.2 L1289.2 643.1 L1285.6 640.2 L1281.5 637.5 Z" fill="#eeeadf" stroke="none"/>
<path d="M1281.5 583.5 L1281.5 637.5" fill="none" stroke="#1e1e1e" stroke-width="1.25" stroke-linejoin="round" stroke-linecap="round"/>
<ellipse cx="664.7" cy="577.6" rx="22.7" ry="11.8" fill="#f3f0e6" stroke="#1e1e1e" stroke-width="1.25"/>
<ellipse cx="662.3" cy="579.4" rx="9.5" ry="5.4" fill="#e2dfd5" stroke="#1e1e1e" stroke-width="1.25"/>
<path d="M711.2 498.4 L711.2 574.0" fill="none" stroke="#1e1e1e" stroke-width="1.25" stroke-linejoin="round" stroke-linecap="round"/>
<path d="M873.0 366.0 L945.0 408.0 L990.0 380.0 L940.0 340.0 L880.0 352.0 Z" fill="#ffffff" stroke="none"/>
<path d="M786.7 417.0 L790.7 413.0 L865.4 369.3 L875.0 369.3 L915.0 393.0 L915.0 440.0 L886.0 445.0 L838.0 452.0 L793.8 443.5 Z" fill="#e9e5d9" stroke="none"/>
<path d="M797.0 417.0 L870.2 374.9 L866.0 397.0 L838.0 411.4 L836.0 425.0 L831.2 421.8 L797.0 441.5 Z" fill="#dcd8cc" stroke="none"/>
<path d="M786.7 417 Q786 413 790.7 410.5 L865.4 367.8 Q870 365.5 875 367.8 L915 391 L915 396.5 L870.2 374.9 L797 417 L797 441.5 L793.8 443.5 Q788 432 786.7 417 Z" fill="#f3f0e6" stroke="#1e1e1e" stroke-width="1.25" stroke-linejoin="round"/>
<path d="M870.2 374.9 L866.0 397.0" fill="none" stroke="#1e1e1e" stroke-width="1.25" stroke-linejoin="round" stroke-linecap="round"/>
<path d="M797.0 417.0 L797.0 441.5" fill="none" stroke="#1e1e1e" stroke-width="1.0" stroke-linejoin="round" stroke-linecap="round"/>
<path d="M719.9 486.2 L825.6 425.2 L836.0 426.2 L726.0 489.7 Z" fill="#f3f0e6" stroke="none"/>
<path d="M719.9 486.2 L825.6 425.2" fill="none" stroke="#1e1e1e" stroke-width="1.25" stroke-linejoin="round" stroke-linecap="round"/>
<path d="M726.0 489.7 L836.0 426.2" fill="none" stroke="#1e1e1e" stroke-width="1.25" stroke-linejoin="round" stroke-linecap="round"/>
<path d="M825.6 425.2 L836.0 426.2" fill="none" stroke="#1e1e1e" stroke-width="1.25" stroke-linejoin="round" stroke-linecap="round"/>
<path d="M838.4 411.4 V452 Q842 470 862 470 Q883 470 886 452 V411.4 Z" fill="#efebe0" stroke="#1e1e1e" stroke-width="1.25"/>
<path d="M870 420 V468 Q883 466 886 452 V411.4 Z" fill="#e6e2d6" stroke="none"/>
<ellipse cx="862.2" cy="411.4" rx="23.8" ry="13.5" fill="#f3f0e6" stroke="#1e1e1e" stroke-width="1.25"/>
<ellipse cx="862.2" cy="411.4" rx="9.5" ry="5.6" fill="#e8e4da" stroke="#1e1e1e" stroke-width="1.25"/>
<path d="M836.0 425.0 L836.0 455.0 L844.7 487.0" fill="none" stroke="#1e1e1e" stroke-width="1.25" stroke-linejoin="round" stroke-linecap="round"/>
<path d="M881.3 464.7 L881.3 491.7" fill="none" stroke="#1e1e1e" stroke-width="1.25" stroke-linejoin="round" stroke-linecap="round"/>
<path d="M884.5 464.7 L938.5 436.0" fill="none" stroke="#1e1e1e" stroke-width="1.25" stroke-linejoin="round" stroke-linecap="round"/>
<path d="M844.7 464.7 L844.7 487.0" fill="none" stroke="#1e1e1e" stroke-width="1.25" stroke-linejoin="round" stroke-linecap="round"/>
<path d="M866.3 502.7 Q916 478 959.3 493 L1128.5 590 L1126.5 598.4 L966.5 503.9 Q916 486 868.6 508.6 Z" fill="#f3f0e6" stroke="#1e1e1e" stroke-width="1.2"/>
<path d="M868.6 508.6 Q916 486 966.5 503.9 L1126.5 598.4 L1114.6 620 L1093.6 595.6 L959.3 518.2 Q947 508 930.7 509.8 L887.7 521.2 Z" fill="#ece8dc" stroke="none"/>
<path d="M866.3 502.7 L886.5 521.2" fill="none" stroke="#1e1e1e" stroke-width="1.25" stroke-linejoin="round" stroke-linecap="round"/>
<path d="M966.3 503.7 L962.0 517.6" fill="none" stroke="#1e1e1e" stroke-width="1.25" stroke-linejoin="round" stroke-linecap="round"/>
<path d="M1122.2 593.5 L1114.6 620.0" fill="none" stroke="#1e1e1e" stroke-width="1.25" stroke-linejoin="round" stroke-linecap="round"/>
<path d="M711.2 574.4 Q712 553 737.3 534.1 L822.4 484.9 Q834 478 849 484 Q857 488 861 495 Q865 497 868 505 Q872 512 871 540 L820 575 L745 618 L720 610 Z" fill="#efebe0" stroke="#1e1e1e" stroke-width="1.25"/>
<path d="M711.2 574.4 Q712 553 737.3 534.1 L756.7 546.8 Q733 560 733 590 L733 612 L720 610 Z" fill="#e4e0d4" stroke="#1e1e1e" stroke-width="1.2"/>
<path d="M756.7 546.8 L838.7 496.1" fill="none" stroke="#1e1e1e" stroke-width="1.25" stroke-linejoin="round" stroke-linecap="round"/>
<path d="M823.8 484.8 L838.7 496.1" fill="none" stroke="#1e1e1e" stroke-width="1.25" stroke-linejoin="round" stroke-linecap="round"/>
<path d="M838.7 496.1 Q858 490 866 510 L868 525" fill="none" stroke="#1e1e1e" stroke-width="1.2"/>
<path d="M733 593 L733 560 Q740 545 756.7 546.8" fill="none" stroke="#1e1e1e" stroke-width="1.2"/>
<path d="M700 606 L735 585 L790 555 L887.7 521.2 L925 510.5 Q946 504 962 520 L1093.6 595.6 Q1104 603 1108 612 Q1112 630 1106.4 638.6 Q1102 645 1095.2 647 L1061.8 658.1 L919.8 731 L919.8 747 L916.8 735 Z" fill="#2f4470" stroke="#1e1e1e" stroke-width="1.2" stroke-linejoin="round"/>
<path d="M919.8 731.0 L1095.2 647.0 L1106.4 638.6 L1107.0 648.0 L1096.0 657.0 L919.8 745.0 Z" fill="#24365c" stroke="#1e1e1e" stroke-width="1.0" stroke-linejoin="round"/>
<path d="M919.8 745.0 L1108.0 648.0 L1112.0 654.0 L1110.0 666.0 L922.0 760.0 L919.8 762.0 Z" fill="#e9e5d9" stroke="#1e1e1e" stroke-width="1.0" stroke-linejoin="round"/>
<path d="M922.0 753.0 L1110.0 658.0" fill="none" stroke="#1e1e1e" stroke-width="0.9" stroke-linejoin="round" stroke-linecap="round"/>
<path d="M770 571 Q768 563 776 559 L822 533 Q830 529 838 533 L880 557 Q886 561 886 568 L886 578 Q886 584 880 588 L834 613 Q827 617 820 613 L776 588 Q770 584 770 576 Z" fill="#e4e3de" stroke="#1e1e1e" stroke-width="1.3"/>
<path d="M784.7 557.5 L828 533.7 L881.7 563.5 L835.4 586 Z" fill="#e2e1dc" stroke="#1e1e1e" stroke-width="0.9"/>
<path d="M836 591 Q829 595 829 603 L829 613" fill="none" stroke="#1e1e1e" stroke-width="1.0"/>
<path d="M842 599 L873 582 Q877 580 878 584 L847 601.5 Q843 603 842 599 Z" fill="#d8d7d2" stroke="#1e1e1e" stroke-width="1.1"/>
<path d="M766 590 Q764 563 780 551 L823.5 527 Q831 524 834 531" fill="none" stroke="#1e1e1e" stroke-width="1.1"/>
<path d="M822.0 572.0 L828.0 569.0 L829.0 571.5 L823.0 574.5 Z" fill="#333" stroke="#1e1e1e" stroke-width="0.6" stroke-linejoin="round"/>
<path d="M845.0 553.0 L851.0 550.0 L852.0 552.5 L846.0 555.5 Z" fill="#333" stroke="#1e1e1e" stroke-width="0.6" stroke-linejoin="round"/>
<path d="M755.0 602.0 L763.0 598.0 L770.0 602.0 L770.0 612.0 L762.0 616.0 L755.0 612.0 Z" fill="#e4e3de" stroke="#1e1e1e" stroke-width="1.0" stroke-linejoin="round"/>
<path d="M759.0 605.0 L764.0 603.0 L766.0 605.0 L766.0 610.0 L761.0 612.0 L759.0 610.0 Z" fill="#555" stroke="#1e1e1e" stroke-width="0.6" stroke-linejoin="round"/>
<path d="M839.5 534.9 L873.1 515.5 L909.2 538.5 L909.2 547.0 L878.2 562.3 L878.2 554.0 Z" fill="#a9a8a3" stroke="#1e1e1e" stroke-width="1.2" stroke-linejoin="round"/>
<path d="M878.2 554.0 L909.2 538.5 L909.2 547.0 L878.2 562.3 Z" fill="#8f8e8a" stroke="#1e1e1e" stroke-width="1.0" stroke-linejoin="round"/>
<path d="M736.7 617.3 L743.9 593.4 L765.3 582.7 L789.2 592.2 L803.5 601.8 L803.5 611.3 L797.6 634.0 L767.7 638.8 L753.4 636.4 Z" fill="#2b3d66" stroke="#1e1e1e" stroke-width="1.3" stroke-linejoin="round"/>
<path d="M744.0 596.0 L766.0 587.0 L790.0 598.0 L803.0 606.0" fill="none" stroke="#1e1e1e" stroke-width="1.0" stroke-linejoin="round" stroke-linecap="round"/>
<path d="M738.0 612.0 L760.0 603.0 L770.0 608.0 L770.0 637.0" fill="none" stroke="#1e1e1e" stroke-width="1.0" stroke-linejoin="round" stroke-linecap="round"/>
<path d="M742.0 622.0 L764.0 613.0" fill="none" stroke="#1e1e1e" stroke-width="1.0" stroke-linejoin="round" stroke-linecap="round"/>
<path d="M745.0 630.0 L767.0 621.0" fill="none" stroke="#1e1e1e" stroke-width="1.0" stroke-linejoin="round" stroke-linecap="round"/>
<path d="M770.0 608.0 L790.0 598.0 L797.0 605.0 L797.0 632.0" fill="none" stroke="#1e1e1e" stroke-width="1.0" stroke-linejoin="round" stroke-linecap="round"/>
<path d="M776.0 615.0 L794.0 606.0" fill="none" stroke="#1e1e1e" stroke-width="1.0" stroke-linejoin="round" stroke-linecap="round"/>
<path d="M778.0 626.0 L794.0 618.0" fill="none" stroke="#1e1e1e" stroke-width="1.0" stroke-linejoin="round" stroke-linecap="round"/>
<path d="M707 612 Q712 605 722 606 Q733 608 732 620 L728 626 Q715 627 707 620 Z" fill="#1c2640" stroke="#1e1e1e" stroke-width="1"/>
<path d="M791.6 661.0 L800.0 657.0 L810.7 663.0 L810.7 667.4 L802.0 671.0 Z" fill="#24365c" stroke="#1e1e1e" stroke-width="1.0" stroke-linejoin="round"/>
<path d="M897.3 503.9 L897.3 527.6999999999999 A16.7 10.1 0 0 0 930.7 527.6999999999999 L930.7 503.9 Z" fill="#28395f" stroke="#1e1e1e" stroke-width="1.25"/><path d="M919.845 512.99 L919.845 536.79 A16.7 10.1 0 0 0 930.1 528.6999999999999 L930.1 503.9 Z" fill="#1f2d4d" stroke="none"/><ellipse cx="914" cy="503.9" rx="16.7" ry="10.1" fill="#2f4470" stroke="#1e1e1e" stroke-width="1.25"/>
<ellipse cx="914" cy="503.9" rx="10" ry="6" fill="#18223c" stroke="#1e1e1e" stroke-width="1.0"/>
<path d="M1074.2 604 L1074.2 628 A16.7 9.7 0 0 0 1107.6000000000001 628 L1107.6000000000001 604 Z" fill="#28395f" stroke="#1e1e1e" stroke-width="1.25"/><path d="M1096.7450000000001 612.73 L1096.7450000000001 636.73 A16.7 9.7 0 0 0 1107.0000000000002 629 L1107.0000000000002 604 Z" fill="#1f2d4d" stroke="none"/><ellipse cx="1090.9" cy="604" rx="16.7" ry="9.7" fill="#2f4470" stroke="#1e1e1e" stroke-width="1.25"/>
<ellipse cx="1090.9" cy="604" rx="10" ry="6" fill="#18223c" stroke="#1e1e1e" stroke-width="1.0"/>
<path d="M943.7 631.0 L978.6 612.3 L1009.6 631.0 L1009.6 643.0 L976.6 662.5 L943.7 645.2 Z" fill="#a9a8a3" stroke="#1e1e1e" stroke-width="1.25" stroke-linejoin="round"/>
<path d="M943.7 631.0 L976.6 651.0 L976.6 662.5 L943.7 645.2 Z" fill="#8f8e8a" stroke="#1e1e1e" stroke-width="1.0" stroke-linejoin="round"/>
<path d="M976.6 651.0 L1009.6 631.0 L1009.6 643.0 L976.6 662.5 Z" fill="#7b7a77" stroke="#1e1e1e" stroke-width="1.0" stroke-linejoin="round"/>
<path d="M845.5 676.5 L892.0 649.7 L938.5 677.0 L938.5 684.0 L892.0 711.0 L845.5 683.5 Z" fill="#a9a8a3" stroke="#1e1e1e" stroke-width="1.25" stroke-linejoin="round"/>
<path d="M845.5 676.5 L892.0 704.0 L892.0 711.0 L845.5 683.5 Z" fill="#8f8e8a" stroke="#1e1e1e" stroke-width="1.0" stroke-linejoin="round"/>
<path d="M892.0 704.0 L938.5 677.0 L938.5 684.0 L892.0 711.0 Z" fill="#7b7a77" stroke="#1e1e1e" stroke-width="1.0" stroke-linejoin="round"/>
<path d="M898.5 616.8 L920.4 603.9 L938.5 614.2 L938.5 618.1 L915.3 630.4 L898.5 620.7 Z" fill="#2e4270" stroke="#1e1e1e" stroke-width="1.2" stroke-linejoin="round"/>
<path d="M898.5 616.8 L915.3 626.5 L938.5 614.2" fill="none" stroke="#1e1e1e" stroke-width="0.9" stroke-linejoin="round" stroke-linecap="round"/>
<path d="M915.3 626.5 L915.3 630.4" fill="none" stroke="#1e1e1e" stroke-width="0.9" stroke-linejoin="round" stroke-linecap="round"/>
<path d="M912.7 642.6 L920.4 638.1 L933.4 645.9 L925.6 651.7 Z" fill="#2a3d68" stroke="#1e1e1e" stroke-width="1.1" stroke-linejoin="round"/>
<path d="M921.7 632.3 L938.5 622.0 L946.3 627.1 L941.1 643.9 L930.0 640.0 Z" fill="#2b3e69" stroke="#1e1e1e" stroke-width="1.0" stroke-linejoin="round"/>
<path d="M836.5 654.3 L848.1 646.5 L863.0 655.6 L863.0 659.4 L850.7 664.6 L836.5 658.1 Z" fill="#1a1a1a" stroke="#1e1e1e" stroke-width="1.1" stroke-linejoin="round"/>
<path d="M837.5 654.3 L848.1 647.5 L862.0 655.6 L850.7 661.5 Z" fill="#2f3d5e" stroke="#1e1e1e" stroke-width="0.8" stroke-linejoin="round"/>
<path d="M822.6 625.6 L829.8 617.3 L844.1 624.4 L851.3 631.6 L851.3 637.6 L840.5 640.0 L822.6 631.6 Z" fill="#222222" stroke="#1e1e1e" stroke-width="1.1" stroke-linejoin="round"/>
<path d="M836.0 630.0 L849.0 625.0" fill="none" stroke="#bbbbbb" stroke-width="1.0" stroke-linejoin="round" stroke-linecap="round"/>
<path d="M841.0 641.0 L846.0 639.0 L848.0 642.0 L843.0 644.0 Z" fill="#e8e8e8" stroke="#1e1e1e" stroke-width="0.5" stroke-linejoin="round"/>
<path d="M839.3 610.1 L848.9 603.0 L865.6 611.3 L866.8 618.5 L856.0 624.4 L839.3 614.9 Z" fill="#2c3f6a" stroke="#1e1e1e" stroke-width="1.15" stroke-linejoin="round"/>
<path d="M860.8 622.0 L870.0 616.0 L889.0 625.0 L891.8 634.0 L880.0 640.0 L860.8 630.0 Z" fill="#2c3f6a" stroke="#1e1e1e" stroke-width="1.15" stroke-linejoin="round"/>
<path d="M866.8 594.6 L877.0 588.0 L897.0 598.0 L899.0 607.7 L888.0 613.0 L866.8 602.0 Z" fill="#2c3f6a" stroke="#1e1e1e" stroke-width="1.15" stroke-linejoin="round"/>
<path d="M894.3 577.3 L905.0 572.5 L924.1 580.8 L925.3 586.8 L914.6 594.0 L894.3 583.2 Z" fill="#2c3f6a" stroke="#1e1e1e" stroke-width="1.15" stroke-linejoin="round"/>
<path d="M949.2 607.1 L958.8 601.1 L975.5 610.7 L975.5 615.5 L960.0 622.0 L949.2 612.0 Z" fill="#2c3f6a" stroke="#1e1e1e" stroke-width="1.15" stroke-linejoin="round"/>
<path d="M846.0 608.0 L858.0 613.0" fill="none" stroke="#141c30" stroke-width="1.6" stroke-linejoin="round" stroke-linecap="round"/>
<path d="M868.0 620.0 L882.0 627.0" fill="none" stroke="#141c30" stroke-width="1.6" stroke-linejoin="round" stroke-linecap="round"/>
<path d="M874.0 594.0 L890.0 602.0" fill="none" stroke="#141c30" stroke-width="1.6" stroke-linejoin="round" stroke-linecap="round"/>
<path d="M902.0 578.0 L916.0 585.0" fill="none" stroke="#141c30" stroke-width="1.6" stroke-linejoin="round" stroke-linecap="round"/>
<path d="M956.0 606.0 L968.0 612.0" fill="none" stroke="#141c30" stroke-width="1.6" stroke-linejoin="round" stroke-linecap="round"/>
<path d="M893.1 566.0 L899.0 562.5 L906.2 566.5 L906.2 569.0 L900.0 572.5 L893.1 569.0 Z" fill="#e6d68a" stroke="#1e1e1e" stroke-width="1.0" stroke-linejoin="round"/>
<ellipse cx="934.9" cy="590.4" rx="2.6" ry="1.8" fill="#151e33"/>
<ellipse cx="945.6" cy="596.3" rx="2.6" ry="1.8" fill="#151e33"/>
<ellipse cx="950.4" cy="598.7" rx="2.6" ry="1.8" fill="#151e33"/>
<ellipse cx="882" cy="642" rx="2.6" ry="1.8" fill="#151e33"/>
<ellipse cx="955" cy="669" rx="2.6" ry="1.8" fill="#151e33"/>
<ellipse cx="969" cy="676" rx="2.6" ry="1.8" fill="#151e33"/>
<ellipse cx="1051" cy="632" rx="2.6" ry="1.8" fill="#151e33"/>
<ellipse cx="1057" cy="636" rx="2.6" ry="1.8" fill="#151e33"/>
<ellipse cx="908" cy="652" rx="2.6" ry="1.8" fill="#151e33"/>
<path d="M1017.2 574.9 L1036.3 565.3 L1059.0 579.6 L1064.5 583.0 L1064.5 612.3 L1046.0 623.0 L1017.8 607.0 Z" fill="#2c3e66" stroke="#1e1e1e" stroke-width="1.3" stroke-linejoin="round"/>
<path d="M1017.2 576.0 L1046.0 592.0 L1064.5 583.0" fill="none" stroke="#1e1e1e" stroke-width="1.0" stroke-linejoin="round" stroke-linecap="round"/>
<path d="M1046.0 592.0 L1046.0 623.0" fill="none" stroke="#1e1e1e" stroke-width="1.0" stroke-linejoin="round" stroke-linecap="round"/>
<path d="M1050.0 590.0 L1050.0 621.0" fill="none" stroke="#1e1e1e" stroke-width="0.8" stroke-linejoin="round" stroke-linecap="round"/>
<path d="M1023.0 577.0 L1036.0 570.0 L1058.0 582.0 L1045.0 589.0 Z" fill="#1d2a48" stroke="#1e1e1e" stroke-width="1.0" stroke-linejoin="round"/>
<path d="M1033.0 575.0 L1033.0 586.0" fill="none" stroke="#1e1e1e" stroke-width="1.4" stroke-linejoin="round" stroke-linecap="round"/>
<path d="M1040.0 578.0 L1040.0 590.0" fill="none" stroke="#1e1e1e" stroke-width="1.4" stroke-linejoin="round" stroke-linecap="round"/>
<path d="M959.2 672.0 L989.2 658.0 L1004.2 666.0 L1004.2 682.0 L974.2 697.0 L959.2 689.0 Z" fill="#ebe8dc" stroke="#1e1e1e" stroke-width="1.2" stroke-linejoin="round"/><path d="M959.2 672.0 L989.2 658.0 L1004.2 666.0 L974.2 680.0 Z" fill="#f1eee3" stroke="#1e1e1e" stroke-width="1.0" stroke-linejoin="round"/><path d="M959.2 681.0 L974.2 689.0 L1004.2 674.0" fill="none" stroke="#1e1e1e" stroke-width="1.0" stroke-linejoin="round" stroke-linecap="round"/><path d="M974.2 680.0 L974.2 697.0" fill="none" stroke="#1e1e1e" stroke-width="1.0" stroke-linejoin="round" stroke-linecap="round"/><path d="M978.2 686.0 L994.2 678.0 L1002.2 682.0 L1002.2 689.0 L986.2 697.0 L978.2 693.0 Z" fill="#555450" stroke="#1e1e1e" stroke-width="1.0" stroke-linejoin="round"/><path d="M978.2 686.0 L994.2 678.0 L1002.2 682.0 L986.2 690.0 Z" fill="#888" stroke="#1e1e1e" stroke-width="0.8" stroke-linejoin="round"/>
<path d="M1020.0 636.0 L1050.0 622.0 L1065.0 630.0 L1065.0 646.0 L1035.0 661.0 L1020.0 653.0 Z" fill="#ebe8dc" stroke="#1e1e1e" stroke-width="1.2" stroke-linejoin="round"/><path d="M1020.0 636.0 L1050.0 622.0 L1065.0 630.0 L1035.0 644.0 Z" fill="#f1eee3" stroke="#1e1e1e" stroke-width="1.0" stroke-linejoin="round"/><path d="M1020.0 645.0 L1035.0 653.0 L1065.0 638.0" fill="none" stroke="#1e1e1e" stroke-width="1.0" stroke-linejoin="round" stroke-linecap="round"/><path d="M1035.0 644.0 L1035.0 661.0" fill="none" stroke="#1e1e1e" stroke-width="1.0" stroke-linejoin="round" stroke-linecap="round"/><path d="M1039.0 650.0 L1055.0 642.0 L1063.0 646.0 L1063.0 653.0 L1047.0 661.0 L1039.0 657.0 Z" fill="#555450" stroke="#1e1e1e" stroke-width="1.0" stroke-linejoin="round"/><path d="M1039.0 650.0 L1055.0 642.0 L1063.0 646.0 L1047.0 654.0 Z" fill="#888" stroke="#1e1e1e" stroke-width="0.8" stroke-linejoin="round"/>
<path d="M1063.0 624.0 L1071.0 619.5 L1080.0 624.5 L1080.0 631.0 L1072.0 635.5 L1063.0 630.5 Z" fill="#2a3b62" stroke="#1e1e1e" stroke-width="1.0" stroke-linejoin="round"/>
<path d="M1066.0 625.0 L1066.0 632.0" fill="none" stroke="#1e1e1e" stroke-width="0.8" stroke-linejoin="round" stroke-linecap="round"/>
<path d="M1071.0 627.5 L1071.0 634.0" fill="none" stroke="#1e1e1e" stroke-width="0.8" stroke-linejoin="round" stroke-linecap="round"/>
<path d="M908.7 711.0 L938.7 697.0 L953.7 705.0 L953.7 721.0 L923.7 736.0 L908.7 728.0 Z" fill="#ebe8dc" stroke="#1e1e1e" stroke-width="1.2" stroke-linejoin="round"/><path d="M908.7 711.0 L938.7 697.0 L953.7 705.0 L923.7 719.0 Z" fill="#f1eee3" stroke="#1e1e1e" stroke-width="1.0" stroke-linejoin="round"/><path d="M908.7 720.0 L923.7 728.0 L953.7 713.0" fill="none" stroke="#1e1e1e" stroke-width="1.0" stroke-linejoin="round" stroke-linecap="round"/><path d="M923.7 719.0 L923.7 736.0" fill="none" stroke="#1e1e1e" stroke-width="1.0" stroke-linejoin="round" stroke-linecap="round"/><path d="M927.7 725.0 L943.7 717.0 L951.7 721.0 L951.7 728.0 L935.7 736.0 L927.7 732.0 Z" fill="#555450" stroke="#1e1e1e" stroke-width="1.0" stroke-linejoin="round"/><path d="M927.7 725.0 L943.7 717.0 L951.7 721.0 L935.7 729.0 Z" fill="#888" stroke="#1e1e1e" stroke-width="0.8" stroke-linejoin="round"/>
<path d="M1128.4 563.5 L1128.4 632 A24.5 14.2 0 0 0 1177.4 632 L1177.4 563.5 Z" fill="#f0ece1" stroke="#1e1e1e" stroke-width="1.25"/>
<path d="M1160 576 L1160 645.5 Q1174 641 1176.7 632 L1176.7 564 Z" fill="#e7e3d7" stroke="none"/>
<ellipse cx="1152.9" cy="563.5" rx="24.5" ry="14.2" fill="#f3f0e6" stroke="#1e1e1e" stroke-width="1.25"/>
<ellipse cx="1152.9" cy="563.5" rx="9.5" ry="5.6" fill="#e8e4da" stroke="#1e1e1e" stroke-width="1.25"/>
<path d="M1181.0 620.0 L1223.0 645.0" fill="none" stroke="#1e1e1e" stroke-width="1.25" stroke-linejoin="round" stroke-linecap="round"/>
<path d="M1078.1 703.5 L1078.1 712 Q1080 728 1101.8 731.4 L1192.3 690 L1192.3 681.3 Z" fill="#e9e5d9" stroke="#1e1e1e" stroke-width="1.2"/>
<path d="M1087.9 689 L1157.5 654.1 Q1170 650 1185 660 Q1198 668 1197.8 675 Q1197 680 1192.3 681.3 L1119.9 719 Q1105 726 1090 723 Q1076 718 1078.1 703.5 Q1079 694 1087.9 689 Z" fill="#f3f0e6" stroke="#1e1e1e" stroke-width="1.25"/>
<path d="M1083.4 717.0 L1083.4 727.0" fill="none" stroke="#1e1e1e" stroke-width="1.0" stroke-linejoin="round" stroke-linecap="round"/>
<path d="M1097.0 724.0 L1097.0 731.0" fill="none" stroke="#1e1e1e" stroke-width="1.0" stroke-linejoin="round" stroke-linecap="round"/>
<path d="M1224 612 L1260 610 L1268 626 L1268 650 L1226 652 Z" fill="#ece8dc" stroke="none"/>
<ellipse cx="1246.7" cy="624.2" rx="23" ry="12.5" fill="#f3f0e6" stroke="#1e1e1e" stroke-width="1.25"/>
<ellipse cx="1246.3" cy="624.6" rx="9.5" ry="5.5" fill="#e6e2d8" stroke="#1e1e1e" stroke-width="1.25"/>
<ellipse cx="893.8" cy="712.4" rx="21.4" ry="12" fill="#f3f0e6" stroke="#1e1e1e" stroke-width="1.25"/>
<ellipse cx="893.3" cy="713" rx="9.4" ry="5.5" fill="#e6e2d8" stroke="#1e1e1e" stroke-width="1.25"/>
<path d="M613.5 655.4 L613.8 659.7 L614.9 664.0 L616.8 668.2 L619.3 672.3 L622.5 676.3 L626.4 680.0 L630.9 683.5 L636.0 686.8 L955.1 871.0 L962.7 874.8 L971.0 878.1 L980.1 880.6 L989.6 882.5 L999.5 883.6 L1009.5 884.0 L1019.5 883.6 L1029.4 882.5 L1038.9 880.6 L1048.0 878.1 L1056.3 874.8 L1063.9 871.0 L1296.0 737.0 L1301.0 733.8 L1305.5 730.3 L1309.4 726.5 L1312.6 722.6 L1315.2 718.5 L1317.0 714.3 L1318.1 710.0 L1318.5 705.6 L1318.5 629.6 L1318.1 634.0 L1317.0 638.3 L1315.2 642.5 L1312.6 646.6 L1309.4 650.5 L1305.5 654.3 L1301.0 657.8 L1296.0 661.0 L1063.9 795.0 L1056.3 798.8 L1048.0 802.1 L1038.9 804.6 L1029.4 806.5 L1019.5 807.6 L1009.5 808.0 L999.5 807.6 L989.6 806.5 L980.1 804.6 L971.0 802.1 L962.7 798.8 L955.1 795.0 L636.0 610.8 L630.9 607.5 L626.4 604.0 L622.5 600.3 L619.3 596.3 L616.8 592.2 L614.9 588.0 L613.8 583.7 L613.5 579.4 Z" fill="#ece9dc" stroke="none"/>
<path d="M1009.5 884.0 L1019.5 883.6 L1029.4 882.5 L1038.9 880.6 L1048.0 878.1 L1056.3 874.8 L1063.9 871.0 L1296.0 737.0 L1302.6 732.6 L1308.2 727.8 L1312.6 722.6 L1315.9 717.1 L1317.8 711.4 L1318.5 705.6 L1318.5 629.6 L1317.8 635.4 L1315.9 641.1 L1312.6 646.6 L1308.2 651.8 L1302.6 656.6 L1296.0 661.0 L1063.9 795.0 L1056.3 798.8 L1048.0 802.1 L1038.9 804.6 L1029.4 806.5 L1019.5 807.6 L1009.5 808.0 Z" fill="#e4e0d3" stroke="none"/>
<path d="M613.5 579.4 L613.8 583.7 L614.9 588.0 L616.8 592.2 L619.3 596.3 L622.5 600.3 L626.4 604.0 L630.9 607.5 L636.0 610.8 L955.1 795.0 L962.7 798.8 L971.0 802.1 L980.1 804.6 L989.6 806.5 L999.5 807.6 L1009.5 808.0 L1019.5 807.6 L1029.4 806.5 L1038.9 804.6 L1048.0 802.1 L1056.3 798.8 L1063.9 795.0 L1296.0 661.0 L1301.0 657.8 L1305.5 654.3 L1309.4 650.5 L1312.6 646.6 L1315.2 642.5 L1317.0 638.3 L1318.1 634.0 L1318.5 629.6 L1306.6 629.6 L1306.3 633.3 L1305.4 636.9 L1303.8 640.5 L1301.7 644.0 L1298.9 647.3 L1295.7 650.5 L1291.9 653.4 L1287.6 656.1 L1055.5 790.1 L1049.1 793.4 L1042.0 796.1 L1034.4 798.3 L1026.3 799.9 L1018.0 800.8 L1009.5 801.1 L1001.0 800.8 L992.7 799.9 L984.6 798.3 L977.0 796.1 L969.9 793.4 L963.5 790.1 L644.4 605.9 L640.1 603.2 L636.3 600.2 L633.0 597.0 L630.3 593.7 L628.1 590.2 L626.6 586.7 L625.7 583.0 L625.3 579.3 Z" fill="#f3f0e6" stroke="none"/>
<path d="M613.5 655.4 L613.8 659.7 L614.9 664.0 L616.8 668.2 L619.3 672.3 L622.5 676.3 L626.4 680.0 L630.9 683.5 L636.0 686.8 L955.1 871.0 L962.7 874.8 L971.0 878.1 L980.1 880.6 L989.6 882.5 L999.5 883.6 L1009.5 884.0 L1019.5 883.6 L1029.4 882.5 L1038.9 880.6 L1048.0 878.1 L1056.3 874.8 L1063.9 871.0 L1296.0 737.0 L1301.0 733.8 L1305.5 730.3 L1309.4 726.5 L1312.6 722.6 L1315.2 718.5 L1317.0 714.3 L1318.1 710.0 L1318.5 705.6" fill="none" stroke="#1e1e1e" stroke-width="1.25" stroke-linejoin="round" stroke-linecap="round"/>
<path d="M613.5 579.4 L613.8 583.7 L614.9 588.0 L616.8 592.2 L619.3 596.3 L622.5 600.3 L626.4 604.0 L630.9 607.5 L636.0 610.8 L955.1 795.0 L962.7 798.8 L971.0 802.1 L980.1 804.6 L989.6 806.5 L999.5 807.6 L1009.5 808.0 L1019.5 807.6 L1029.4 806.5 L1038.9 804.6 L1048.0 802.1 L1056.3 798.8 L1063.9 795.0 L1296.0 661.0 L1301.0 657.8 L1305.5 654.3 L1309.4 650.5 L1312.6 646.6 L1315.2 642.5 L1317.0 638.3 L1318.1 634.0 L1318.5 629.6" fill="none" stroke="#1e1e1e" stroke-width="1.25" stroke-linejoin="round" stroke-linecap="round"/>
<path d="M955.1 871.0 L955.1 795.0" fill="none" stroke="#1e1e1e" stroke-width="1.25" stroke-linejoin="round" stroke-linecap="round"/>
<path d="M1063.9 871.0 L1063.9 795.0" fill="none" stroke="#1e1e1e" stroke-width="1.25" stroke-linejoin="round" stroke-linecap="round"/>
<path d="M1296.0 737.0 L1296.0 661.0" fill="none" stroke="#1e1e1e" stroke-width="1.25" stroke-linejoin="round" stroke-linecap="round"/>
<path d="M636.0 686.8 L636.0 610.8" fill="none" stroke="#1e1e1e" stroke-width="1.25" stroke-linejoin="round" stroke-linecap="round"/>
<path d="M625.3 579.3 L625.7 583.0 L626.6 586.7 L628.1 590.2 L630.3 593.7 L633.0 597.0 L636.3 600.2 L640.1 603.2 L644.4 605.9 L910.5 759.5 L910.5 736.5 L644.4 582.9 L640.1 580.2 L636.3 577.2 L633.0 574.0 L630.3 570.7 L628.1 567.2 L626.6 563.7 L625.7 560.0 L625.3 556.3 Z" fill="#e9e6d9" stroke="none"/>
<path d="M625.3 556.3 L625.7 560.0 L626.6 563.7 L628.1 567.2 L630.3 570.7 L633.0 574.0 L636.3 577.2 L640.1 580.2 L644.4 582.9 L910.5 736.5 L916.6 733.0 L650.5 579.4 L646.7 577.0 L643.4 574.5 L640.6 571.7 L638.2 568.8 L636.4 565.8 L635.0 562.7 L634.2 559.5 L633.9 556.3 Z" fill="#f3f0e6" stroke="none"/>
<path d="M625.3 579.3 L625.7 583.0 L626.6 586.7 L628.1 590.2 L630.3 593.7 L633.0 597.0 L636.3 600.2 L640.1 603.2 L644.4 605.9 L910.5 759.5" fill="none" stroke="#1e1e1e" stroke-width="1.25" stroke-linejoin="round" stroke-linecap="round"/>
<path d="M625.3 556.3 L625.7 560.0 L626.6 563.7 L628.1 567.2 L630.3 570.7 L633.0 574.0 L636.3 577.2 L640.1 580.2 L644.4 582.9 L910.5 736.5" fill="none" stroke="#1e1e1e" stroke-width="1.25" stroke-linejoin="round" stroke-linecap="round"/>
<path d="M633.9 556.3 L634.2 559.5 L635.0 562.7 L636.4 565.8 L638.2 568.8 L640.6 571.7 L643.4 574.5 L646.7 577.0 L650.5 579.4 L916.6 733.0" fill="none" stroke="#1e1e1e" stroke-width="1.25" stroke-linejoin="round" stroke-linecap="round"/>
<path d="M910.5 759.5 L910.5 736.5 L916.6 733.0 L916.6 756.0 Z" fill="#ebe7dc" stroke="#1e1e1e" stroke-width="1.25" stroke-linejoin="round"/>
<path d="M644.4 605.9 L644.4 582.9" fill="none" stroke="#1e1e1e" stroke-width="1.25" stroke-linejoin="round" stroke-linecap="round"/>
<path d="M963.5 790.1 L969.9 793.4 L977.0 796.1 L984.6 798.3 L992.7 799.9 L1001.0 800.8 L1009.5 801.1 L1018.0 800.8 L1026.3 799.9 L1034.4 798.3 L1042.0 796.1 L1049.1 793.4 L1055.5 790.1 L1287.6 656.1 L1290.5 654.4 L1293.2 652.5 L1295.7 650.5 L1297.9 648.4 L1299.9 646.2 L1301.7 644.0 L1303.2 641.7 L1304.4 639.3 L1305.4 636.9 L1306.1 634.5 L1306.5 632.1 L1306.6 629.6 L1306.6 606.6 L1306.5 609.1 L1306.1 611.5 L1305.4 613.9 L1304.4 616.3 L1303.2 618.7 L1301.7 621.0 L1299.9 623.2 L1297.9 625.4 L1295.7 627.5 L1293.2 629.5 L1290.5 631.4 L1287.6 633.1 L1055.5 767.1 L1049.1 770.4 L1042.0 773.1 L1034.4 775.3 L1026.3 776.9 L1018.0 777.8 L1009.5 778.1 L1001.0 777.8 L992.7 776.9 L984.6 775.3 L977.0 773.1 L969.9 770.4 L963.5 767.1 Z" fill="#e0dccf" stroke="none"/>
<path d="M963.5 767.1 L969.9 770.4 L977.0 773.1 L984.6 775.3 L992.7 776.9 L1001.0 777.8 L1009.5 778.1 L1018.0 777.8 L1026.3 776.9 L1034.4 775.3 L1042.0 773.1 L1049.1 770.4 L1055.5 767.1 L1287.6 633.1 L1293.2 629.5 L1297.9 625.4 L1301.7 621.0 L1304.4 616.3 L1306.1 611.5 L1306.6 606.6 L1306.1 601.7 L1304.4 596.9 L1301.7 592.2 L1297.9 587.8 L1293.2 583.7 L1287.6 580.0 L1281.5 583.5 L1286.4 586.8 L1290.5 590.3 L1293.7 594.1 L1296.1 598.2 L1297.6 602.3 L1298.0 606.6 L1297.6 610.9 L1296.1 615.0 L1293.7 619.1 L1290.5 622.9 L1286.4 626.4 L1281.5 629.6 L1049.4 763.6 L1043.9 766.5 L1037.7 768.8 L1031.1 770.7 L1024.1 772.1 L1016.9 772.9 L1009.5 773.2 L1002.1 772.9 L994.9 772.1 L987.9 770.7 L981.3 768.8 L975.1 766.5 L969.6 763.6 Z" fill="#f3f0e6" stroke="none"/>
<path d="M963.5 790.1 L969.9 793.4 L977.0 796.1 L984.6 798.3 L992.7 799.9 L1001.0 800.8 L1009.5 801.1 L1018.0 800.8 L1026.3 799.9 L1034.4 798.3 L1042.0 796.1 L1049.1 793.4 L1055.5 790.1 L1287.6 656.1 L1290.5 654.4 L1293.2 652.5 L1295.7 650.5 L1297.9 648.4 L1299.9 646.2 L1301.7 644.0 L1303.2 641.7 L1304.4 639.3 L1305.4 636.9 L1306.1 634.5 L1306.5 632.1 L1306.6 629.6" fill="none" stroke="#1e1e1e" stroke-width="1.25" stroke-linejoin="round" stroke-linecap="round"/>
<path d="M963.5 767.1 L969.9 770.4 L977.0 773.1 L984.6 775.3 L992.7 776.9 L1001.0 777.8 L1009.5 778.1 L1018.0 777.8 L1026.3 776.9 L1034.4 775.3 L1042.0 773.1 L1049.1 770.4 L1055.5 767.1 L1287.6 633.1 L1293.2 629.5 L1297.9 625.4 L1301.7 621.0 L1304.4 616.3 L1306.1 611.5 L1306.6 606.6 L1306.1 601.7 L1304.4 596.9 L1301.7 592.2 L1297.9 587.8 L1293.2 583.7 L1287.6 580.0" fill="none" stroke="#1e1e1e" stroke-width="1.25" stroke-linejoin="round" stroke-linecap="round"/>
<path d="M969.6 763.6 L975.1 766.5 L981.3 768.8 L987.9 770.7 L994.9 772.1 L1002.1 772.9 L1009.5 773.2 L1016.9 772.9 L1024.1 772.1 L1031.1 770.7 L1037.7 768.8 L1043.9 766.5 L1049.4 763.6 L1281.5 629.6 L1286.4 626.4 L1290.5 622.9 L1293.7 619.1 L1296.1 615.0 L1297.6 610.9 L1298.0 606.6 L1297.6 602.3 L1296.1 598.2 L1293.7 594.1 L1290.5 590.3 L1286.4 586.8 L1281.5 583.5" fill="none" stroke="#1e1e1e" stroke-width="1.25" stroke-linejoin="round" stroke-linecap="round"/>
<path d="M963.5 790.1 L963.5 767.1" fill="none" stroke="#1e1e1e" stroke-width="1.25" stroke-linejoin="round" stroke-linecap="round"/>
<path d="M1055.5 790.1 L1055.5 767.1" fill="none" stroke="#1e1e1e" stroke-width="1.25" stroke-linejoin="round" stroke-linecap="round"/>
<path d="M1287.6 656.1 L1287.6 633.1" fill="none" stroke="#1e1e1e" stroke-width="1.25" stroke-linejoin="round" stroke-linecap="round"/>
<path d="M963.5 790.1 L963.5 767.1 L969.6 763.6" fill="none" stroke="#1e1e1e" stroke-width="1.25" stroke-linejoin="round" stroke-linecap="round"/>
<path d="M1287.6 580.0 L1281.5 583.5" fill="none" stroke="#1e1e1e" stroke-width="1.25" stroke-linejoin="round" stroke-linecap="round"/>
<path d="M964.6 765.5 Q990 752 1024.4 730 Q1032 727 1039.8 730 Q1060 738 1065.5 748.7 Q1067 756 1057.2 762.7 Q1010 790 964.6 765.5 Z" fill="#f3f0e6" stroke="#1e1e1e" stroke-width="1.25"/>
<path d="M1046.0 440.0 L1059.8 449.6 L1090.4 433.0 L1090.4 418.0 L1046.0 428.0 Z" fill="#2e8d8a" stroke="#1e1e1e" stroke-width="1.1" stroke-linejoin="round"/>
<path d="M1046.0 440.0 L1059.8 449.6 L1059.8 437.0 L1046.0 428.0 Z" fill="#3fa3a0" stroke="#1e1e1e" stroke-width="0.9" stroke-linejoin="round"/>
<path d="M1178.0 365.0 L1191.3 374.5 L1222.5 356.4 L1222.5 342.0 L1178.0 352.0 Z" fill="#2e8d8a" stroke="#1e1e1e" stroke-width="1.1" stroke-linejoin="round"/>
<path d="M1178.0 365.0 L1191.3 374.5 L1191.3 362.0 L1178.0 352.0 Z" fill="#3fa3a0" stroke="#1e1e1e" stroke-width="0.9" stroke-linejoin="round"/>
<path d="M908.1 401.2 L908.2 402.7 L908.5 404.1 L909.2 405.5 L910.0 406.9 L911.1 408.2 L912.4 409.4 L913.9 410.6 L915.6 411.7 L939.4 425.4 L939.4 425.4 L942.3 424.2 L945.8 423.6 L949.4 423.6 L952.9 424.2 L955.9 425.4 L958.0 427.2 L959.1 429.1 L959.1 431.3 L958.0 433.2 L955.9 434.9 L983.1 450.7 L987.0 452.5 L991.5 453.9 L996.3 454.8 L1001.3 455.0 L1006.3 454.8 L1011.2 453.9 L1015.6 452.5 L1019.5 450.7 L1284.5 297.7 L1286.2 296.6 L1287.7 295.4 L1289.0 294.2 L1290.1 292.9 L1290.9 291.5 L1291.5 290.1 L1291.9 288.7 L1292.0 287.2 L1292.0 297.2 L1291.9 298.7 L1291.5 300.1 L1290.9 301.5 L1290.1 302.9 L1289.0 304.2 L1287.7 305.4 L1286.2 306.6 L1284.5 307.7 L1019.5 460.7 L1015.6 462.5 L1011.2 463.9 L1006.3 464.8 L1001.3 465.0 L996.3 464.8 L991.5 463.9 L987.0 462.5 L983.1 460.7 L955.9 444.9 L958.0 443.2 L959.1 441.3 L959.1 439.1 L958.0 437.2 L955.9 435.4 L952.9 434.2 L949.4 433.6 L945.8 433.6 L942.3 434.2 L939.4 435.4 L939.4 435.4 L915.6 421.7 L913.9 420.6 L912.4 419.4 L911.1 418.2 L910.0 416.9 L909.2 415.5 L908.5 414.1 L908.2 412.7 L908.1 411.2 Z" fill="#e5e1d4" stroke="#1e1e1e" stroke-width="1.2" stroke-linejoin="round"/>
<path d="M915.6 390.7 L912.4 393.0 L910.0 395.5 L908.5 398.3 L908.1 401.2 L908.5 404.1 L910.0 406.9 L912.4 409.4 L915.6 411.7 L939.4 425.4 L939.4 425.4 L942.3 424.2 L945.8 423.6 L949.4 423.6 L952.9 424.2 L955.9 425.4 L958.0 427.2 L959.1 429.1 L959.1 431.3 L958.0 433.2 L955.9 434.9 L983.1 450.7 L987.0 452.5 L991.5 453.9 L996.3 454.8 L1001.3 455.0 L1006.3 454.8 L1011.2 453.9 L1015.6 452.5 L1019.5 450.7 L1284.5 297.7 L1287.7 295.4 L1290.1 292.9 L1291.5 290.1 L1292.0 287.2 L1291.5 284.3 L1290.1 281.5 L1287.7 279.0 L1284.5 276.7 L1257.2 260.9 L1257.2 260.9 L1254.3 262.2 L1250.8 262.8 L1247.2 262.8 L1243.7 262.2 L1240.8 260.9 L1238.6 259.2 L1237.5 257.3 L1237.5 255.1 L1238.6 253.2 L1240.8 251.4 L1217.0 237.7 L1213.1 235.9 L1208.6 234.5 L1203.8 233.6 L1198.8 233.4 L1193.8 233.6 L1188.9 234.5 L1184.5 235.9 L1180.6 237.7 Z" fill="#f1eee3" stroke="#1e1e1e" stroke-width="1.3" stroke-linejoin="round"/>
<path d="M915.6 390.7 L915.6 400.7" fill="none" stroke="#1e1e1e" stroke-width="1.0" stroke-linejoin="round" stroke-linecap="round"/>
<path d="M1284.5 297.7 L1284.5 307.7" fill="none" stroke="#1e1e1e" stroke-width="1.0" stroke-linejoin="round" stroke-linecap="round"/>
<path d="M983.1 450.7 L983.1 460.7" fill="none" stroke="#1e1e1e" stroke-width="1.0" stroke-linejoin="round" stroke-linecap="round"/>
<path d="M955.9 434.9 L955.9 444.9" fill="none" stroke="#1e1e1e" stroke-width="1.0" stroke-linejoin="round" stroke-linecap="round"/>
<path d="M1143.4 270.1 L1145.4 267.6 L1148.9 268.6 L1151.4 271.1 L1151.4 275.6 L1149.2 276.1 L1149.2 273.1 L1145.6 271.3 L1145.6 274.6 L1143.4 273.8 Z" fill="#0f2a2a"/>
<path d="M1145.6 271.3 L1149.2 273.1 L1149.2 275.6 L1145.6 274.4 Z" fill="#4f9a92"/>
<path d="M1162.8 281.7 L1164.8 279.2 L1168.3 280.2 L1170.8 282.7 L1170.8 287.2 L1168.6 287.7 L1168.6 284.7 L1165.0 282.9 L1165.0 286.2 L1162.8 285.4 Z" fill="#0f2a2a"/>
<path d="M1165.0 282.9 L1168.6 284.7 L1168.6 287.2 L1165.0 286.0 Z" fill="#4f9a92"/>
<path d="M1102.0 294.1 L1104.0 291.6 L1107.5 292.6 L1110.0 295.1 L1110.0 299.6 L1107.8 300.1 L1107.8 297.1 L1104.2 295.3 L1104.2 298.6 L1102.0 297.8 Z" fill="#0f2a2a"/>
<path d="M1104.2 295.3 L1107.8 297.1 L1107.8 299.6 L1104.2 298.4 Z" fill="#4f9a92"/>
<path d="M1122.8 305.0 L1124.8 302.5 L1128.3 303.5 L1130.8 306.0 L1130.8 310.5 L1128.6 311.0 L1128.6 308.0 L1125.0 306.2 L1125.0 309.5 L1122.8 308.7 Z" fill="#0f2a2a"/>
<path d="M1125.0 306.2 L1128.6 308.0 L1128.6 310.5 L1125.0 309.3 Z" fill="#4f9a92"/>
<path d="M1196.4 301.1 L1198.4 298.6 L1201.9 299.6 L1204.4 302.1 L1204.4 306.6 L1202.2 307.1 L1202.2 304.1 L1198.6 302.3 L1198.6 305.6 L1196.4 304.8 Z" fill="#0f2a2a"/>
<path d="M1198.6 302.3 L1202.2 304.1 L1202.2 306.6 L1198.6 305.4 Z" fill="#4f9a92"/>
<path d="M1217.0 313.2 L1219.0 310.7 L1222.5 311.7 L1225.0 314.2 L1225.0 318.7 L1222.8 319.2 L1222.8 316.2 L1219.2 314.4 L1219.2 317.7 L1217.0 316.9 Z" fill="#0f2a2a"/>
<path d="M1219.2 314.4 L1222.8 316.2 L1222.8 318.7 L1219.2 317.5 Z" fill="#4f9a92"/>
<path d="M1155.6 324.4 L1157.6 321.9 L1161.1 322.9 L1163.6 325.4 L1163.6 329.9 L1161.4 330.4 L1161.4 327.4 L1157.8 325.6 L1157.8 328.9 L1155.6 328.1 Z" fill="#0f2a2a"/>
<path d="M1157.8 325.6 L1161.4 327.4 L1161.4 329.9 L1157.8 328.7 Z" fill="#4f9a92"/>
<path d="M1176.3 337.3 L1178.3 334.8 L1181.8 335.8 L1184.3 338.3 L1184.3 342.8 L1182.1 343.3 L1182.1 340.3 L1178.5 338.5 L1178.5 341.8 L1176.3 341.0 Z" fill="#0f2a2a"/>
<path d="M1178.5 338.5 L1182.1 340.3 L1182.1 342.8 L1178.5 341.6 Z" fill="#4f9a92"/>
<path d="M1011.7 346.3 L1013.7 343.8 L1017.2 344.8 L1019.7 347.3 L1019.7 351.8 L1017.5 352.3 L1017.5 349.3 L1013.9 347.5 L1013.9 350.8 L1011.7 350.0 Z" fill="#0f2a2a"/>
<path d="M1013.9 347.5 L1017.5 349.3 L1017.5 351.8 L1013.9 350.6 Z" fill="#4f9a92"/>
<path d="M1031.6 358.7 L1033.6 356.2 L1037.1 357.2 L1039.6 359.7 L1039.6 364.2 L1037.4 364.7 L1037.4 361.7 L1033.8 359.9 L1033.8 363.2 L1031.6 362.4 Z" fill="#0f2a2a"/>
<path d="M1033.8 359.9 L1037.4 361.7 L1037.4 364.2 L1033.8 363.0 Z" fill="#4f9a92"/>
<path d="M970.3 370.1 L972.3 367.6 L975.8 368.6 L978.3 371.1 L978.3 375.6 L976.1 376.1 L976.1 373.1 L972.5 371.3 L972.5 374.6 L970.3 373.8 Z" fill="#0f2a2a"/>
<path d="M972.5 371.3 L976.1 373.1 L976.1 375.6 L972.5 374.4 Z" fill="#4f9a92"/>
<path d="M991.0 382.0 L993.0 379.5 L996.5 380.5 L999.0 383.0 L999.0 387.5 L996.8 388.0 L996.8 385.0 L993.2 383.2 L993.2 386.5 L991.0 385.7 Z" fill="#0f2a2a"/>
<path d="M993.2 383.2 L996.8 385.0 L996.8 387.5 L993.2 386.3 Z" fill="#4f9a92"/>
<path d="M1064.7 377.3 L1066.7 374.8 L1070.2 375.8 L1072.7 378.3 L1072.7 382.8 L1070.5 383.3 L1070.5 380.3 L1066.9 378.5 L1066.9 381.8 L1064.7 381.0 Z" fill="#0f2a2a"/>
<path d="M1066.9 378.5 L1070.5 380.3 L1070.5 382.8 L1066.9 381.6 Z" fill="#4f9a92"/>
<path d="M1085.3 389.0 L1087.3 386.5 L1090.8 387.5 L1093.3 390.0 L1093.3 394.5 L1091.1 395.0 L1091.1 392.0 L1087.5 390.2 L1087.5 393.5 L1085.3 392.7 Z" fill="#0f2a2a"/>
<path d="M1087.5 390.2 L1091.1 392.0 L1091.1 394.5 L1087.5 393.3 Z" fill="#4f9a92"/>
<path d="M1023.8 401.4 L1025.8 398.9 L1029.3 399.9 L1031.8 402.4 L1031.8 406.9 L1029.6 407.4 L1029.6 404.4 L1026.0 402.6 L1026.0 405.9 L1023.8 405.1 Z" fill="#0f2a2a"/>
<path d="M1026.0 402.6 L1029.6 404.4 L1029.6 406.9 L1026.0 405.7 Z" fill="#4f9a92"/>
<path d="M1044.5 413.0 L1046.5 410.5 L1050.0 411.5 L1052.5 414.0 L1052.5 418.5 L1050.3 419.0 L1050.3 416.0 L1046.7 414.2 L1046.7 417.5 L1044.5 416.7 Z" fill="#0f2a2a"/>
<path d="M1046.7 414.2 L1050.3 416.0 L1050.3 418.5 L1046.7 417.3 Z" fill="#4f9a92"/>

</svg>
<!-- MODEL END -->
<!-- viewcube -->
<svg class="a" style="left:1780px;top:180px" width="132" height="110" viewBox="1780 180 132 110">
 <defs><linearGradient id="cg1" x1="0" y1="0" x2="1" y2="1"><stop offset="0" stop-color="#f4f4f4"/><stop offset="1" stop-color="#dcdcdc"/></linearGradient>
 <linearGradient id="cg2" x1="0" y1="0" x2="1" y2="1"><stop offset="0" stop-color="#e8e8e8"/><stop offset="1" stop-color="#d0d0d0"/></linearGradient></defs>
 <path d="M1819.5 213.5 L1852 199 L1890 214.5 L1854.5 234 Z" fill="url(#cg1)" stroke="#666" stroke-width="0.9"/>
 <path d="M1819.5 213.5 L1854.5 234 L1854.5 275 L1824 251 Z" fill="url(#cg2)" stroke="#666" stroke-width="0.9"/>
 <path d="M1854.5 234 L1890 214.5 L1887 253 L1854.5 275 Z" fill="url(#cg1)" stroke="#666" stroke-width="0.9"/>
 <path d="M1851 195.5 L1890 214" stroke="#8fe08f" stroke-width="1.6"/>
 <path d="M1889 215 L1848.5 238" stroke="#e86a6a" stroke-width="1.8"/>
 <path d="M1889.5 215 L1886 257" stroke="#8a8ae8" stroke-width="1.6"/>
 <text x="1842" y="197" font-family="Liberation Sans" font-size="11" fill="#8fe08f">Y</text>
 <text x="1837" y="247" font-family="Liberation Sans" font-size="10" fill="#e86a6a">X</text>
 <text x="1881" y="268" font-family="Liberation Sans" font-size="11" fill="#8a8ae8">Z</text>
 <text x="0" y="0" font-family="Liberation Sans" font-size="7.5" fill="#888" transform="translate(1847 224) rotate(-28)">BACK</text>
 <text x="0" y="0" font-family="Liberation Sans" font-size="8" fill="#888" transform="translate(1858 258) rotate(-35) skewX(-10)">BOTTOM</text>
 <text x="0" y="0" font-family="Liberation Sans" font-size="7.5" fill="#888" transform="translate(1838 258) rotate(-75)">RIGHT</text>
</svg>
<!-- browser -->
<div class="a" style="left:3px;top:176px;width:374px;height:31px;background:#f0f0f0;border:1px solid #c8c8c8"></div>
<div class="t" style="left:35px;top:185px;font-size:13.6px;color:#555">BROWSER</div>
<div class="a" style="left:38px;top:243px;width:33px;height:385px;background:#fcfcfc"></div>
<div class="row" style="left:48px;top:213px;width:190px"></div>
<div class="a" style="left:50px;top:216px;width:4px;height:20px;background:#f4a3a8"></div>
<div class="a" style="left:86px;top:213px;width:122px;height:3px;background:#e4e4e4"></div>
<div class="a" style="left:86px;top:216px;width:122px;height:20px;background:#9a9a9a"></div>
<div class="a" style="left:116px;top:216px;width:1px;height:20px;background:#b2b2b2"></div>
<div class="rt" style="left:128px;top:220px;font-weight:700;color:#fff;font-size:13.4px">SPACE v8</div>
<div class="row" style="left:70.5px;top:243.8px;width:172.5px;height:24px"></div>
<div class="rt" style="left:112.6px;top:249.9px">Document Settings</div>
<div class="row" style="left:70.5px;top:273.8px;width:137.5px;height:24px"></div>
<div class="rt" style="left:112.6px;top:279.9px">Named Views</div>
<div class="row" style="left:70.5px;top:303.8px;width:123.5px;height:24px"></div>
<div class="rt" style="left:143.6px;top:309.9px">Origin</div>
<div class="row" style="left:70.5px;top:333.8px;width:138.1px;height:24px"></div>
<div class="rt" style="left:143.6px;top:339.9px">Analysis</div>
<div class="row" style="left:70.5px;top:363.8px;width:128.0px;height:24px"></div>
<div class="rt" style="left:143.6px;top:369.9px">Bodies</div>
<div class="row" style="left:70.5px;top:393.8px;width:143.3px;height:24px"></div>
<div class="rt" style="left:143.6px;top:399.9px">Sketches</div>
<div class="row" style="left:70.5px;top:423.8px;width:163.1px;height:24px"></div>
<div class="rt" style="left:143.6px;top:429.9px">Construction</div>
<div class="row" style="left:70.5px;top:453.8px;width:159.5px;height:24px"></div>
<div class="a" style="left:70.6px;top:453.8px;width:6px;height:23.5px;background:#d8d84a"></div>
<div class="rt" style="left:149px;top:459.9px">DISPLAY:1</div>
<div class="row" style="left:70.5px;top:483.8px;width:241.0px;height:24px"></div>
<div class="a" style="left:70.6px;top:483.8px;width:6px;height:23.5px;background:#f4a3a8"></div>
<div class="a" style="left:279px;top:483.8px;width:1px;height:24px;background:#e6e6e6"></div>
<div class="rt" style="left:149px;top:489.9px">BUTTON BOARD:1</div>
<div class="row" style="left:70.5px;top:513.8px;width:194.5px;height:24px"></div>
<div class="a" style="left:70.6px;top:513.8px;width:6px;height:23.5px;background:#5cd6d8"></div>
<div class="rt" style="left:149px;top:519.9px">Component176:1</div>
<div class="row" style="left:70.5px;top:543.8px;width:194.5px;height:24px"></div>
<div class="a" style="left:70.6px;top:543.8px;width:6px;height:23.5px;background:#4a7ee6"></div>
<div class="rt" style="left:149px;top:549.9px">Component177:1</div>
<div class="row" style="left:70.5px;top:573.8px;width:194.5px;height:24px"></div>
<div class="a" style="left:70.6px;top:573.8px;width:6px;height:23.5px;background:#f05a6a"></div>
<div class="rt" style="left:149px;top:579.9px">Component178:1</div>
<div class="row" style="left:70.5px;top:603.8px;width:194.5px;height:24px"></div>
<div class="a" style="left:70.6px;top:603.8px;width:6px;height:23.5px;background:#b888f0"></div>
<div class="rt" style="left:149px;top:609.9px">Component179:1</div>
<svg class="a" style="left:0;top:170px" width="390" height="470" viewBox="0 170 390 470">
<path d="M26.5 229.5 L34.8 222 V229.5 Z" fill="#777" stroke="#1a1a1a" stroke-width="1.3" stroke-linejoin="round"/>
<path d="M58 225.8 Q68 215.8 78 225.8 Q68 235.8 58 225.8 Z" fill="#9c9c9c"/><circle cx="68" cy="225.8" r="3.3" fill="none" stroke="#f0f0f0" stroke-width="1.6"/>
<path d="M90.5 219.0 Q90.5 217.0 92.5 217.0 H96.0 L97.5 218.5 V225.0 H105.0 Q107.0 225.0 107.0 227.0 V232.5 Q107.0 234.0 105.5 234.0 H92.0 Q90.5 234.0 90.5 232.5 Z" fill="#e6e6e6" stroke="#8a8a8a" stroke-width="1"/><path d="M97.5 225.0 V234.0 M91.0 226.5 H97.5" stroke="#9a9a9a" stroke-width="0.9"/>
<circle cx="221.8" cy="225.5" r="8" fill="#eaeaea" stroke="#777" stroke-width="1.2"/><circle cx="221.8" cy="225.5" r="3.3" fill="#333"/>
<path d="M49.5 250.1 L56.5 255.6 L49.5 261.1 Z" fill="none" stroke="#333" stroke-width="1.2" stroke-linejoin="round"/>
<g transform="translate(83.4 255.6)"><circle r="6.5" fill="none" stroke="#888" stroke-width="4.2"/><rect x="-2.2" y="-10" width="4.4" height="4.5" fill="#888" transform="rotate(0)"/><rect x="-2.2" y="-10" width="4.4" height="4.5" fill="#888" transform="rotate(45)"/><rect x="-2.2" y="-10" width="4.4" height="4.5" fill="#888" transform="rotate(90)"/><rect x="-2.2" y="-10" width="4.4" height="4.5" fill="#888" transform="rotate(135)"/><rect x="-2.2" y="-10" width="4.4" height="4.5" fill="#888" transform="rotate(180)"/><rect x="-2.2" y="-10" width="4.4" height="4.5" fill="#888" transform="rotate(225)"/><rect x="-2.2" y="-10" width="4.4" height="4.5" fill="#888" transform="rotate(270)"/><rect x="-2.2" y="-10" width="4.4" height="4.5" fill="#888" transform="rotate(315)"/></g>
<path d="M49.5 280.1 L56.5 285.6 L49.5 291.1 Z" fill="none" stroke="#333" stroke-width="1.2" stroke-linejoin="round"/>
<path d="M74 277.6 H81.5 L82.5 279.1 H94 V293.1 H74 Z" fill="#9a9a9a"/><rect x="74" y="279.8" width="7" height="0.9" fill="#f0f0f0"/>
<path d="M49.5 310.1 L56.5 315.6 L49.5 321.1 Z" fill="none" stroke="#333" stroke-width="1.2" stroke-linejoin="round"/>
<path d="M75.0 315.6 Q84.5 306.6 94.0 315.6 Q84.5 324.6 75.0 315.6 Z" fill="none" stroke="#a0a0a0" stroke-width="1"/><path d="M81.5 316.6 A3.2 3.2 0 0 1 86.5 312.6" fill="none" stroke="#a0a0a0" stroke-width="1"/><path d="M78.5 309.6 L90.5 322.1" stroke="#a0a0a0" stroke-width="1.1"/>
<path d="M105.4 307.6 H112.9 L113.9 309.1 H125.4 V323.1 H105.4 Z" fill="#9a9a9a"/><rect x="105.4" y="309.8" width="7" height="0.9" fill="#f0f0f0"/>
<path d="M49.5 340.1 L56.5 345.6 L49.5 351.1 Z" fill="none" stroke="#333" stroke-width="1.2" stroke-linejoin="round"/>
<path d="M75.0 345.6 Q84.5 336.6 94.0 345.6 Q84.5 354.6 75.0 345.6 Z" fill="none" stroke="#a0a0a0" stroke-width="1"/><path d="M81.5 346.6 A3.2 3.2 0 0 1 86.5 342.6" fill="none" stroke="#a0a0a0" stroke-width="1"/><path d="M78.5 339.6 L90.5 352.1" stroke="#a0a0a0" stroke-width="1.1"/>
<path d="M105.4 337.6 H112.9 L113.9 339.1 H125.4 V353.1 H105.4 Z" fill="#9a9a9a"/><rect x="105.4" y="339.8" width="7" height="0.9" fill="#f0f0f0"/>
<path d="M49.5 370.1 L56.5 375.6 L49.5 381.1 Z" fill="none" stroke="#333" stroke-width="1.2" stroke-linejoin="round"/>
<path d="M74.5 375.6 Q84.5 365.6 94.5 375.6 Q84.5 385.6 74.5 375.6 Z" fill="#9c9c9c"/><circle cx="84.5" cy="375.6" r="3.3" fill="none" stroke="#f0f0f0" stroke-width="1.6"/>
<path d="M105.4 367.6 H112.9 L113.9 369.1 H125.4 V383.1 H105.4 Z" fill="#9a9a9a"/><rect x="105.4" y="369.8" width="7" height="0.9" fill="#f0f0f0"/>
<path d="M49.5 400.1 L56.5 405.6 L49.5 411.1 Z" fill="none" stroke="#333" stroke-width="1.2" stroke-linejoin="round"/>
<path d="M74.5 405.6 Q84.5 395.6 94.5 405.6 Q84.5 415.6 74.5 405.6 Z" fill="#9c9c9c"/><circle cx="84.5" cy="405.6" r="3.3" fill="none" stroke="#f0f0f0" stroke-width="1.6"/>
<path d="M105.4 397.6 H112.9 L113.9 399.1 H125.4 V413.1 H105.4 Z" fill="#9a9a9a"/><rect x="105.4" y="399.8" width="7" height="0.9" fill="#f0f0f0"/>
<path d="M49.5 430.1 L56.5 435.6 L49.5 441.1 Z" fill="none" stroke="#333" stroke-width="1.2" stroke-linejoin="round"/>
<path d="M74.5 435.6 Q84.5 425.6 94.5 435.6 Q84.5 445.6 74.5 435.6 Z" fill="#9c9c9c"/><circle cx="84.5" cy="435.6" r="3.3" fill="none" stroke="#f0f0f0" stroke-width="1.6"/>
<path d="M105.4 427.6 H112.9 L113.9 429.1 H125.4 V443.1 H105.4 Z" fill="#9a9a9a"/><rect x="105.4" y="429.8" width="7" height="0.9" fill="#f0f0f0"/>
<path d="M49.5 460.1 L56.5 465.6 L49.5 471.1 Z" fill="none" stroke="#333" stroke-width="1.2" stroke-linejoin="round"/>
<path d="M80.5 465.6 Q90.5 455.6 100.5 465.6 Q90.5 475.6 80.5 465.6 Z" fill="#9c9c9c"/><circle cx="90.5" cy="465.6" r="3.3" fill="none" stroke="#f0f0f0" stroke-width="1.6"/>
<path d="M114 459.1 Q114 457.1 116 457.1 H119.5 L121 458.6 V465.1 H128.5 Q130.5 465.1 130.5 467.1 V472.6 Q130.5 474.1 129 474.1 H115.5 Q114 474.1 114 472.6 Z" fill="#e6e6e6" stroke="#8a8a8a" stroke-width="1"/><path d="M121 465.1 V474.1 M114.5 466.6 H121" stroke="#9a9a9a" stroke-width="0.9"/>
<path d="M49.5 490.1 L56.5 495.6 L49.5 501.1 Z" fill="none" stroke="#333" stroke-width="1.2" stroke-linejoin="round"/>
<path d="M80.5 495.6 Q90.5 485.6 100.5 495.6 Q90.5 505.6 80.5 495.6 Z" fill="#9c9c9c"/><circle cx="90.5" cy="495.6" r="3.3" fill="none" stroke="#f0f0f0" stroke-width="1.6"/>
<path d="M114 489.1 Q114 487.1 116 487.1 H119.5 L121 488.6 V495.1 H128.5 Q130.5 495.1 130.5 497.1 V502.6 Q130.5 504.1 129 504.1 H115.5 Q114 504.1 114 502.6 Z" fill="#e6e6e6" stroke="#8a8a8a" stroke-width="1"/><path d="M121 495.1 V504.1 M114.5 496.6 H121" stroke="#9a9a9a" stroke-width="0.9"/>
<circle cx="294.5" cy="495.6" r="8.2" fill="#e2e2e6" stroke="#777" stroke-width="1"/><ellipse cx="293" cy="493.1" rx="5" ry="3.5" fill="#f4f4f6"/>
<path d="M49.5 520.1 L56.5 525.6 L49.5 531.1 Z" fill="none" stroke="#333" stroke-width="1.2" stroke-linejoin="round"/>
<path d="M80.5 525.6 Q90.5 515.6 100.5 525.6 Q90.5 535.6 80.5 525.6 Z" fill="#9c9c9c"/><circle cx="90.5" cy="525.6" r="3.3" fill="none" stroke="#f0f0f0" stroke-width="1.6"/>
<path d="M114 521.1 L117 518.1 H130 V530.6 L127 533.6 H114 Z" fill="#e8e8e8" stroke="#8a8a8a" stroke-width="1"/><path d="M127 521.1 L130 518.1 V530.6 L127 533.6 Z" fill="#a9a9a9"/><path d="M114.5 521.1 L117 518.6 H129.5 L127 521.1 Z" fill="#f7f7f7"/>
<path d="M49.5 550.1 L56.5 555.6 L49.5 561.1 Z" fill="none" stroke="#333" stroke-width="1.2" stroke-linejoin="round"/>
<path d="M81.0 555.6 Q90.5 546.6 100.0 555.6 Q90.5 564.6 81.0 555.6 Z" fill="none" stroke="#a0a0a0" stroke-width="1"/><path d="M87.5 556.6 A3.2 3.2 0 0 1 92.5 552.6" fill="none" stroke="#a0a0a0" stroke-width="1"/><path d="M84.5 549.6 L96.5 562.1" stroke="#a0a0a0" stroke-width="1.1"/>
<path d="M114 551.1 L117 548.1 H130 V560.6 L127 563.6 H114 Z" fill="#e8e8e8" stroke="#8a8a8a" stroke-width="1"/><path d="M127 551.1 L130 548.1 V560.6 L127 563.6 Z" fill="#a9a9a9"/><path d="M114.5 551.1 L117 548.6 H129.5 L127 551.1 Z" fill="#f7f7f7"/>
<path d="M49.5 580.1 L56.5 585.6 L49.5 591.1 Z" fill="none" stroke="#333" stroke-width="1.2" stroke-linejoin="round"/>
<path d="M81.0 585.6 Q90.5 576.6 100.0 585.6 Q90.5 594.6 81.0 585.6 Z" fill="none" stroke="#a0a0a0" stroke-width="1"/><path d="M87.5 586.6 A3.2 3.2 0 0 1 92.5 582.6" fill="none" stroke="#a0a0a0" stroke-width="1"/><path d="M84.5 579.6 L96.5 592.1" stroke="#a0a0a0" stroke-width="1.1"/>
<path d="M114 581.1 L117 578.1 H130 V590.6 L127 593.6 H114 Z" fill="#e8e8e8" stroke="#8a8a8a" stroke-width="1"/><path d="M127 581.1 L130 578.1 V590.6 L127 593.6 Z" fill="#a9a9a9"/><path d="M114.5 581.1 L117 578.6 H129.5 L127 581.1 Z" fill="#f7f7f7"/>
<path d="M49.5 610.1 L56.5 615.6 L49.5 621.1 Z" fill="none" stroke="#333" stroke-width="1.2" stroke-linejoin="round"/>
<path d="M80.5 615.6 Q90.5 605.6 100.5 615.6 Q90.5 625.6 80.5 615.6 Z" fill="#9c9c9c"/><circle cx="90.5" cy="615.6" r="3.3" fill="none" stroke="#f0f0f0" stroke-width="1.6"/>
<path d="M114 609.1 Q114 607.1 116 607.1 H119.5 L121 608.6 V615.1 H128.5 Q130.5 615.1 130.5 617.1 V622.6 Q130.5 624.1 129 624.1 H115.5 Q114 624.1 114 622.6 Z" fill="#e6e6e6" stroke="#8a8a8a" stroke-width="1"/><path d="M121 615.1 V624.1 M114.5 616.6 H121" stroke="#9a9a9a" stroke-width="0.9"/>
<path d="M15.8 188.3 L9.2 192 L15.8 195.8 Z M22.2 188.3 L15.6 192 L22.2 195.8 Z" fill="#2a2a2a"/>
<circle cx="357" cy="191.5" r="6" fill="#222"/><rect x="353.5" y="190.7" width="7" height="1.7" fill="#fff"/>
</svg>

<!-- comments -->
<div class="a" style="left:3px;top:977px;width:374px;height:29px;background:#f0f0f0;border:1px solid #c8c8c8;border-bottom:none"></div>
<div class="t" style="left:34px;top:985px;font-size:13.6px;color:#555">COMMENTS</div>

<!-- nav bar -->
<div class="a" style="left:811px;top:976px;width:296px;height:30px;background:#f0f0f0"></div>
<svg class="a" style="left:0;top:0" width="1912" height="1006" viewBox="0 0 1912 1006">
 <!-- comments plus -->
 <circle cx="357" cy="992.5" r="6" fill="#222"/><path d="M353.5 992.5 H360.5 M357 989 V996" stroke="#fff" stroke-width="1.6"/>
 <!-- orbit -->
 <g fill="none" stroke="#6a6a6a" stroke-width="1.3">
  <ellipse cx="825" cy="990.5" rx="9.5" ry="4.5"/>
  <path d="M823 982 Q818 990 823 999" stroke-width="1.6"/>
 </g>
 <path d="M823.5 985 L826 990 L823.5 995 L821 990 Z" fill="#3a8de0"/>
 <path d="M828 981 L831 983.5 L828 986 Z M832 995 L829 997.5 L832 1000 Z" fill="#555"/>
 <path d="M842 989 H848 L845 993 Z" fill="#222"/>
 <!-- look at -->
 <rect x="857.5" y="985.5" width="16" height="11" rx="1" fill="#d9d9d9" stroke="#777" stroke-width="1"/>
 <rect x="860" y="988.5" width="11" height="5" fill="#6d7a8c"/>
 <path d="M859 985 L863 981.5 H872 V985" fill="#cfcfcf" stroke="#777" stroke-width="0.9"/>
 <!-- pan hand -->
 <path d="M893 998 Q889 993 889 989 Q889 987 891 988 L893 991 V983.5 Q893 982 894.3 982 Q895.5 982 895.5 983.5 V989 V981.5 Q895.5 980 897 980 Q898.5 980 898.5 981.5 V989 V982 Q898.5 980.5 900 980.5 Q901.5 980.5 901.5 982 V989.5 V984 Q901.5 982.5 903 982.5 Q904.3 982.5 904.3 984 V993 Q904 998 900 999.5 H895 Z" fill="#fff" stroke="#555" stroke-width="1"/>
 <!-- zoom -->
 <circle cx="928.5" cy="988.5" r="6.2" fill="#eef4f8" stroke="#555" stroke-width="1.3"/>
 <path d="M933 993 L939 999" stroke="#333" stroke-width="2.4" stroke-linecap="round"/>
 <path d="M937 982 H941 M939 980 V984 M937 986.5 H941" stroke="#444" stroke-width="0.9"/>
 <!-- zoom window -->
 <rect x="953.5" y="982" width="18" height="18" fill="none" stroke="#999" stroke-width="0.9" stroke-dasharray="2 1.5"/>
 <circle cx="961" cy="989" r="6" fill="#eef4f8" stroke="#555" stroke-width="1.3"/>
 <path d="M965.5 993.5 L971 999" stroke="#333" stroke-width="2.4" stroke-linecap="round"/>
 <path d="M980 989 H986 L983 993 Z" fill="#222"/>
 <!-- display -->
 <rect x="995.5" y="981" width="18" height="13.5" rx="1" fill="#8eb0dc" stroke="#666" stroke-width="1.2"/>
 <path d="M1002 995 V997 H1007 V995 M1000 998 H1009" stroke="#666" stroke-width="1.3"/>
 <path d="M1018 989 H1024 L1021 993 Z" fill="#222"/>
 <!-- grid -->
 <rect x="1033.5" y="981.5" width="18" height="17" fill="#cfd3d8" stroke="#666" stroke-width="1"/>
 <path d="M1037.5 981.5 V998.5 M1041.5 981.5 V998.5 M1045.5 981.5 V998.5 M1049.5 981.5 V998.5 M1033.5 985.5 H1051.5 M1033.5 989.5 H1051.5 M1033.5 993.5 H1051.5" stroke="#777" stroke-width="0.8"/>
 <path d="M1056 989 H1062 L1059 993 Z" fill="#222"/>
 <!-- viewports -->
 <rect x="1072" y="982" width="18.5" height="16.5" rx="1" fill="#6f9fd6" stroke="#555" stroke-width="1"/>
 <path d="M1081.2 982 V998.5" stroke="#555" stroke-width="1"/>
 <path d="M1073 990 H1080 M1082 990 H1090" stroke="#9cc0e8" stroke-width="1"/>
 <path d="M1094 989 H1100 L1097 993 Z" fill="#222"/>
</svg>
</body></html>
